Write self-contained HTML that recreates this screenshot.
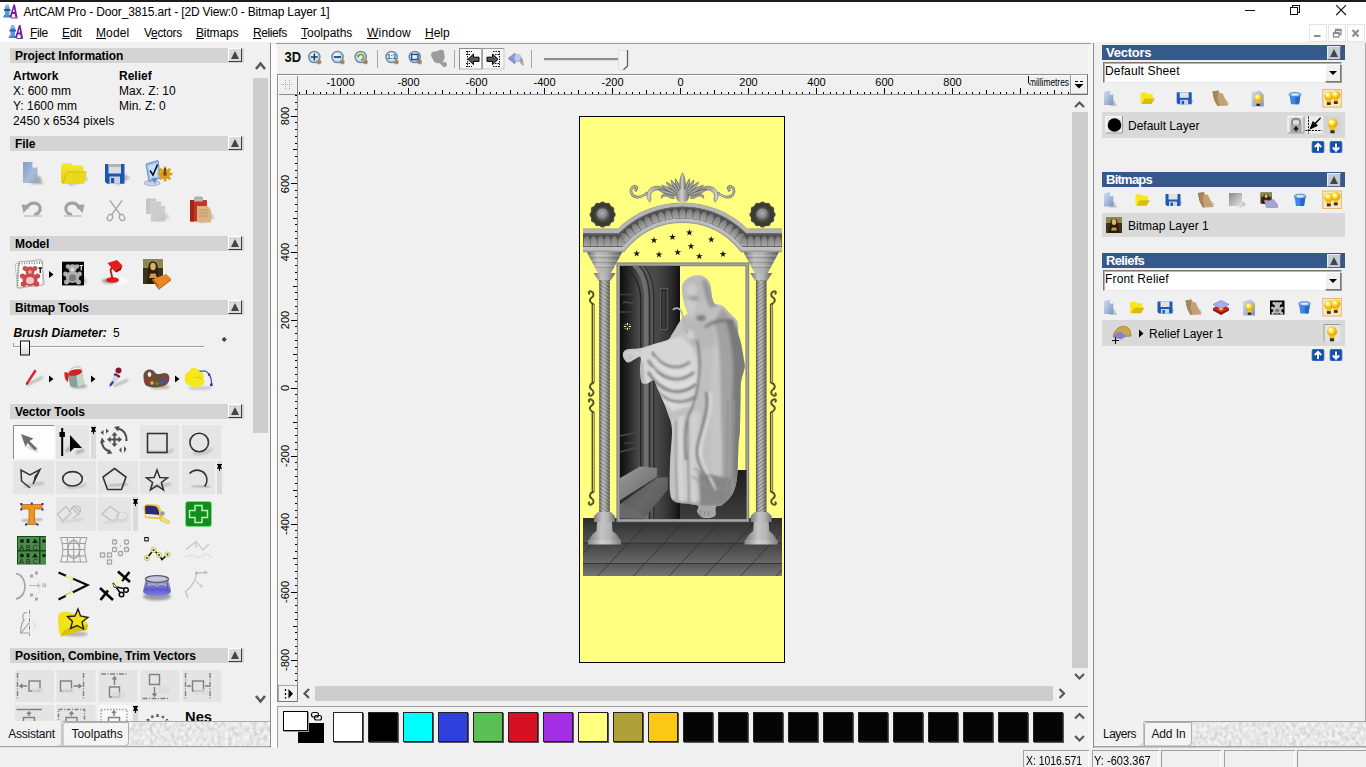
<!DOCTYPE html>
<html>
<head>
<meta charset="utf-8">
<title>ArtCAM Pro - Door_3815.art</title>
<style>
html,body{margin:0;padding:0;}
body{width:1366px;height:767px;overflow:hidden;background:#f0f0f0;font-family:"Liberation Sans",sans-serif;font-size:12px;color:#000;position:relative;}
.a{position:absolute;}
.t{position:absolute;white-space:pre;line-height:14px;height:14px;}
.b{font-weight:bold;}
/* title + menu */
#topline{left:0;top:0;width:1366px;height:2px;background:#1c1c1c;}
#titlebar{left:0;top:2px;width:1366px;height:40px;background:#fff;}
/* left panel section headers */
.hdr{position:absolute;left:10px;width:234px;height:15px;background:#d4d4d4;}
.hdr .t{left:5px;top:1px;font-weight:bold;letter-spacing:-0.1px;}
.cbtn{position:absolute;width:13.5px;height:14px;box-sizing:border-box;border:1px solid;border-color:#fff #3c3c3c #3c3c3c #fff;background:#dadada;}
.cbtn:after{content:"";position:absolute;left:1.5px;top:2px;border:4.3px solid transparent;border-top-width:0;border-bottom:8px solid #454545;}
.hdr .cbtn{left:218px;top:0px;}
/* right panel headers */
.bh{position:absolute;left:1102px;width:243px;height:15px;background:#36598c;}
.bh .t{left:4px;top:0px;font-weight:bold;color:#fff;font-size:13px;line-height:15px;height:15px;letter-spacing:-0.25px;}
.bh .cbtn{left:225px;top:1px;background:#c3cbd6;border-color:#e8ecf2 #5a6a80 #5a6a80 #e8ecf2;}
.dd{position:absolute;left:1103px;width:239px;height:21px;box-sizing:border-box;background:#fff;border:1px solid;border-color:#7a7a7a #e6e6e6 #e6e6e6 #7a7a7a;box-shadow:inset 1px 1px 0 #b4b4b4;}
.dd .t{left:1px;top:1px;letter-spacing:0.15px;}
.dd .ar{position:absolute;right:0px;top:1px;width:16px;height:18px;box-sizing:border-box;background:#f0f0f0;border:1px solid;border-color:#fff #7a7a7a #7a7a7a #fff;box-shadow:1px 1px 0 #9a9a9a;}
.dd .ar:after{content:"";position:absolute;left:3px;top:6px;border:4px solid transparent;border-bottom-width:0;border-top:4px solid #000;}
.lrow{position:absolute;left:1102px;width:243px;background:#d9d9d9;}
.sw{position:absolute;top:712px;width:30px;height:30px;box-sizing:border-box;border:1px solid #222;box-shadow:1px 1px 0 #555;}
.ud{position:absolute;width:12px;height:12px;background:#1b4fa8;border-radius:2px;}
</style>
</head>
<body>
<div class="a" id="titlebar"></div>
<div class="a" id="topline"></div>

<!-- TITLE -->
<div class="t" style="left:23.5px;top:4.5px;letter-spacing:-0.15px;">ArtCAM Pro - Door_3815.art - [2D View:0 - Bitmap Layer 1]</div>

<!-- MENU -->
<div id="menu">
<div class="t" style="left:30px;top:26px;letter-spacing:-0.4px"><u>F</u>ile</div>
<div class="t" style="left:62px;top:26px;letter-spacing:-0.3px"><u>E</u>dit</div>
<div class="t" style="left:96px;top:26px;letter-spacing:0.1px"><u>M</u>odel</div>
<div class="t" style="left:144px;top:26px;letter-spacing:-0.3px">V<u>e</u>ctors</div>
<div class="t" style="left:196px;top:26px;letter-spacing:-0.15px"><u>B</u>itmaps</div>
<div class="t" style="left:253px;top:26px;letter-spacing:-0.4px"><u>R</u>eliefs</div>
<div class="t" style="left:301px;top:26px;"><u>T</u>oolpaths</div>
<div class="t" style="left:367px;top:26px;letter-spacing:0.2px"><u>W</u>indow</div>
<div class="t" style="left:425px;top:26px;"><u>H</u>elp</div>
</div>

<!-- LEFT PANEL -->
<div id="left">
<div class="hdr" style="top:48px"><div class="t">Project Information</div><div class="cbtn"></div></div>
<div class="t b" style="left:13px;top:69px">Artwork</div>
<div class="t b" style="left:119px;top:69px">Relief</div>
<div class="t" style="left:13px;top:84px">X: 600 mm</div>
<div class="t" style="left:119px;top:84px">Max. Z: 10</div>
<div class="t" style="left:13px;top:99px">Y: 1600 mm</div>
<div class="t" style="left:119px;top:99px">Min. Z: 0</div>
<div class="t" style="left:13px;top:114px;letter-spacing:0.07px">2450 x 6534 pixels</div>
<div class="hdr" style="top:136px"><div class="t">File</div><div class="cbtn"></div></div>
<svg class="a" style="left:0;top:0" width="271" height="748" viewBox="0 0 271 748">
<defs>
<filter id="lb1" x="-40%" y="-40%" width="180%" height="180%"><feGaussianBlur stdDeviation="1.1"/></filter>
<filter id="lb2" x="-30%" y="-30%" width="160%" height="160%"><feGaussianBlur stdDeviation="1.2"/></filter>
<linearGradient id="gdoc" x1="0" y1="0" x2="1" y2="1"><stop offset="0" stop-color="#7f9ccb"/><stop offset="0.6" stop-color="#a9bcd8"/><stop offset="1" stop-color="#8fa3c4"/></linearGradient>
<linearGradient id="gfold" x1="0" y1="0" x2="0" y2="1"><stop offset="0" stop-color="#f6ea2a"/><stop offset="1" stop-color="#e2cc14"/></linearGradient>
<linearGradient id="gbowl" x1="0" y1="0" x2="0" y2="1"><stop offset="0" stop-color="#b8b8f0"/><stop offset="0.6" stop-color="#5a5ad0"/><stop offset="1" stop-color="#8a8ae0"/></linearGradient>
<linearGradient id="gthumb" x1="0" y1="0" x2="0" y2="1"><stop offset="0" stop-color="#fff"/><stop offset="1" stop-color="#d8d8d8"/></linearGradient>
</defs>

<!-- ===== FILE ROW 1 ===== -->
<!-- new doc -->
<path d="M30,184 L43,184 L40,176 L36,176 Z" fill="#9a9a9a" filter="url(#lb1)" opacity="0.8"/>
<path d="M23,162 H32.500 L37.500,167.500 V183 H23 Z" fill="url(#gdoc)"/>
<path d="M32.500,162 L37.500,167.500 H32.500 Z" fill="#f4f8ff"/>
<!-- folder -->
<path d="M70,186 L88,180 L84,174 L66,180 Z" fill="#9a9a9a" filter="url(#lb1)" opacity="0.6"/>
<path d="M61,166 C61,164 62,163 64,163 L71,163 L73,165.500 L81,165.500 C83,165.500 83.500,166.500 83.500,168 V172 L86.500,172 L84,183.500 H63 C61.500,183.500 61,182.500 61,181 Z" fill="url(#gfold)"/>
<path d="M63,183.500 L66.500,173.500 C67,172.300 67.500,172 69,172 H86.500 L84,183.500 Z" fill="#ecd81a"/>
<path d="M63,183.500 L66.500,173.500 C67,172.300 67.500,172 69,172 H86.500" fill="none" stroke="#c8b010" stroke-width="0.7"/>
<!-- floppy -->
<path d="M118,185 L130,178 L125,174 L114,182 Z" fill="#9a9a9a" filter="url(#lb1)" opacity="0.7"/>
<path d="M105,164 H124.500 V183.800 H107 L105,181.800 Z" fill="#1c54b4"/>
<rect x="108.500" y="164" width="12.500" height="9.500" fill="#dcdcdc"/><rect x="108.500" y="164" width="12.500" height="3" fill="#b4b4b4"/>
<rect x="109.500" y="176.500" width="10.500" height="7.300" fill="#c9d2e2"/><rect x="111" y="178" width="3.200" height="5" fill="#1c54b4"/>
<!-- options -->
<ellipse cx="152" cy="183" rx="8" ry="2.800" fill="#c8d2ec" stroke="#8894bc" stroke-width="0.6"/>
<path d="M146,164 L158,160.500 L160.500,178 L149,181.500 Z" fill="#9cc4f0" stroke="#5a78c0" stroke-width="0.8"/>
<path d="M148,166 L156.500,163.500 L158.500,176 L150.500,178.500 Z" fill="#c6e0fa"/>
<path d="M150,170.500 L153,175 L157.500,164.500" fill="none" stroke="#101018" stroke-width="1.600"/>
<path d="M151,178 L155,184 L157,178" fill="#7a86c0"/>
<g fill="#d8a020"><circle cx="165" cy="174" r="5.200"/><rect x="163.700" y="166.500" width="2.600" height="15" /><rect x="157.500" y="172.700" width="15" height="2.600"/><rect x="163.700" y="166.500" width="2.600" height="15" transform="rotate(45 165 174)"/><rect x="163.700" y="166.500" width="2.600" height="15" transform="rotate(-45 165 174)"/></g>
<circle cx="165" cy="174" r="2" fill="#7a5a10"/><rect x="164.300" y="168" width="1.400" height="5" fill="#3a2a08"/>

<!-- ===== FILE ROW 2 ===== -->
<g fill="none" stroke="#a2a2a2" stroke-width="3.200" stroke-linecap="butt">
<path d="M27,209 C27,202 38,201 40,207 C41,211 38,214 34,215"/>
<path d="M79,209 C79,202 68,201 66,207 C65,211 68,214 72,215"/>
</g>
<path d="M21.500,204.500 L31,205 L23.500,213 Z" fill="#a2a2a2"/><path d="M84.500,204.500 L75,205 L82.500,213 Z" fill="#a2a2a2"/>
<path d="M24,216 H42 M64,216 H82" stroke="#c4c4c4" stroke-width="1.500"/>
<!-- scissors -->
<g fill="none" stroke="#a8a8a8" stroke-width="1.300"><path d="M110,200.500 L120.500,215 M122,200.500 L111.500,215"/><ellipse cx="110" cy="217.500" rx="2.600" ry="3.200" transform="rotate(25 110 217.500)"/><ellipse cx="122" cy="217.500" rx="2.600" ry="3.200" transform="rotate(-25 122 217.500)"/></g>
<!-- copy -->
<path d="M146,198.500 H156 V214 H146 Z" fill="#c6c6c6"/><path d="M151,201.500 H161 L165,206 V221.500 H151 Z" fill="#cdcdcd" stroke="#dcdcdc" stroke-width="0.600"/><path d="M161,201.500 L165,206 H161 Z" fill="#eee"/>
<path d="M155,222.500 L170,218 L166,213" fill="#c0c0c0" filter="url(#lb1)" opacity="0.7"/>
<!-- paste -->
<path d="M200,224 L214,218 L210,212" fill="#9a9a9a" filter="url(#lb1)" opacity="0.7"/>
<rect x="190" y="200" width="17" height="21.500" rx="1" fill="#c83424"/><rect x="190" y="200" width="4" height="21.500" fill="#a82418"/>
<path d="M195,197 H202 L203,201.500 H194 Z" fill="#b8b8b8" stroke="#8a8a8a" stroke-width="0.600"/>
<path d="M197,206 H207.500 L211,209.500 V222.500 H197 Z" fill="#dcb484"/><path d="M199,210 H208 M199,213 H208 M199,216 H208" stroke="#b89060" stroke-width="0.800"/>

<!-- ===== MODEL ROW ===== -->
<path d="M15,264 L41,259 L44.500,284 L18,288.500 Z" fill="#fafafa" stroke="#b0b0b0" stroke-width="0.800"/>
<path d="M19,261.500 L42.500,261 L43,285 L17,287.500 Z" fill="#fff" stroke="#9c9c9c" stroke-width="0.800"/>
<path d="M19,263.500 L42.500,263 " stroke="#888" stroke-width="2" stroke-dasharray="1 1.500"/>
<path d="M18.500,265 L17.500,286" stroke="#888" stroke-width="2" stroke-dasharray="1 1.500"/>
<g fill="#cc4a4a"><circle cx="25" cy="268.500" r="2.400"/><circle cx="35" cy="268.500" r="2.400"/><circle cx="30" cy="271" r="4.600"/><ellipse cx="30" cy="279.500" rx="7.500" ry="6.500"/><circle cx="23.500" cy="284" r="2.800"/><circle cx="36.500" cy="284" r="2.800"/><circle cx="22.500" cy="276" r="2.600"/><circle cx="37.500" cy="276" r="2.600"/></g>
<ellipse cx="30" cy="280.500" rx="4" ry="3.600" fill="#f4c8c8"/><circle cx="30" cy="272" r="1.800" fill="#f0b0b0"/>
<path d="M38.500,268 H42 M40.250,268 V273" stroke="#111" stroke-width="1.300"/>
<path d="M49,271 L53.500,274.500 L49,278 Z" fill="#000"/>
<path d="M78,287 L87,282 L84,276" fill="#9a9a9a" filter="url(#lb1)" opacity="0.600"/>
<rect x="62" y="261.700" width="22" height="23.700" fill="#050505"/>
<g fill="#b0b0b0"><circle cx="68" cy="266.500" r="2.200"/><circle cx="77" cy="266.500" r="2.200"/><circle cx="72.500" cy="268.500" r="4.200"/><ellipse cx="72.500" cy="277" rx="6.800" ry="6"/><circle cx="66.500" cy="282" r="2.500"/><circle cx="78.500" cy="282" r="2.500"/><circle cx="65.500" cy="274" r="2.400"/><circle cx="79.500" cy="274" r="2.400"/></g>
<ellipse cx="72.500" cy="278" rx="3.600" ry="3.400" fill="#7c7c7c"/><circle cx="72.500" cy="269.500" r="1.700" fill="#e0e0e0"/>
<path d="M79.500,265.500 H83 M81.250,265.500 V270.500" stroke="#eee" stroke-width="1.200"/>
<!-- lamp -->
<ellipse cx="119" cy="281" rx="9" ry="3" fill="#fff" filter="url(#lb2)"/>
<ellipse cx="110" cy="281" rx="8" ry="2.600" fill="#777" filter="url(#lb2)" opacity="0.700"/>
<ellipse cx="112.500" cy="280" rx="6.500" ry="2.800" fill="#e21c1c"/>
<path d="M112.500,279 L110.500,270 L113,266" fill="none" stroke="#c01818" stroke-width="1.800"/>
<path d="M107.500,263 L117,260 L122.500,265.500 L114,271 Z" fill="#e61c1c"/><path d="M114,271 L122.500,265.500 L121,270 L116.500,272.500 Z" fill="#a81010"/>
<!-- mona -->
<rect x="143" y="259" width="20" height="25" fill="#3c3218"/><rect x="143" y="259" width="20" height="9" fill="#8a8a50"/>
<path d="M147,284 C147,276 149,272 153,272 C157,272 159.500,276 160,284 Z" fill="#2a200c"/>
<path d="M148.500,266 C148.500,260 157.500,260 157.500,266 L158.500,274 H147.500 Z" fill="#2c1e0c"/>
<ellipse cx="153" cy="266.500" rx="2.800" ry="3.800" fill="#d8b070"/><path d="M150.500,273.500 H155.500 L157,278 H149 Z" fill="#c89858"/>
<path d="M152,279.500 L166,274 L171,278.500 L158,288.500 Z" fill="#e88820"/><path d="M152,279.500 L158,288.500 L158,285 L153.500,279 Z" fill="#b45c10"/><path d="M158,288.500 L171,278.500 L171,280.500 L158.500,290 Z" fill="#c06a12"/>

<!-- ===== BITMAP TOOLS ===== -->
<rect x="13" y="346" width="191" height="1" fill="#a0a0a0"/><rect x="13" y="347" width="191" height="1" fill="#fff"/><rect x="13" y="343" width="1" height="4" fill="#a0a0a0"/>
<rect x="20.500" y="341" width="9" height="14" fill="url(#gthumb)" stroke="#111" stroke-width="1"/>
<path d="M224.200,336.800 L226.800,339.400 L224.200,342 L221.600,339.400 Z" fill="#3a4660"/>
<!-- pencil -->
<path d="M27,385 L43,377" stroke="#9a9a9a" stroke-width="2" filter="url(#lb1)" opacity="0.800"/>
<path d="M34.500,369.500 L36.800,371 L28,384 L26,385 L26.300,382.500 Z" fill="#dc2430"/><path d="M26,385 L26.300,382.500 L28,384 Z" fill="#502020"/>
<path d="M49,375.500 L53.500,379 L49,382.500 Z M91,375.500 L95.500,379 L91,382.500 Z M175,375.500 L179.500,379 L175,382.500 Z" fill="#000"/>
<!-- bucket -->
<ellipse cx="79" cy="386" rx="8" ry="2.500" fill="#8a8a8a" filter="url(#lb1)" opacity="0.700"/>
<path d="M68,374 L82,371 L84,384 C80,388 73,388 70,386 Z" fill="#8aa09c"/><path d="M76,373 L82,371 L84,384 C82,386 80,386.500 78,387 Z" fill="#c8d4d0"/>
<ellipse cx="75" cy="372.500" rx="7.200" ry="3" fill="#d42020" transform="rotate(-12 75 372.500)"/>
<path d="M64.500,372 C64,378 66,381 68,382 L69,373 Z" fill="#d42020"/>
<path d="M68,374 C70,366 82,364 82,371" fill="none" stroke="#aaa" stroke-width="0.800"/>
<!-- dropper -->
<path d="M114,386 L128,380" stroke="#9a9a9a" stroke-width="2.400" filter="url(#lb1)" opacity="0.800"/>
<circle cx="118.500" cy="370.500" r="3" fill="#8a1830"/><path d="M115,373 L120.500,376 L119,378 L113.500,375 Z" fill="#701428"/>
<path d="M115.500,375.500 L118.500,377.500 L112,385 L109.500,386.500 L110,384 Z" fill="#d4dcf4" stroke="#8890c0" stroke-width="0.500"/><path d="M112.500,381 L114,382.300 L111.500,385.500 L109.500,386.500 L110,384 Z" fill="#2838b0"/>
<!-- palette -->
<ellipse cx="160" cy="387" rx="10" ry="2" fill="#8a8a8a" filter="url(#lb1)" opacity="0.600"/>
<path d="M143.500,377 C143,371 148,368.500 152,370 C155,371 155,374 158,374 C162,374 164,372 167,373.500 C171,375.500 170,384 164,386 C158,388 148,388 145.500,385 C144,383 143.700,380 143.500,377 Z" fill="#6e4c3c"/>
<ellipse cx="149.500" cy="374.500" rx="1.800" ry="2.400" fill="#f0f0f0"/>
<circle cx="147.500" cy="381" r="1.700" fill="#d02020"/><circle cx="152" cy="383" r="1.700" fill="#e8c020"/><circle cx="157" cy="383.500" r="1.700" fill="#28a030"/><circle cx="162" cy="382.500" r="1.700" fill="#2060d0"/><circle cx="166" cy="380" r="1.700" fill="#8030c0"/>
<!-- yellow shape -->
<ellipse cx="200" cy="388" rx="12" ry="1.800" fill="#9a9ac0" filter="url(#lb1)" opacity="0.500"/>
<path d="M200,372 C207,368 212,376 211.500,385" fill="none" stroke="#3848a8" stroke-width="1.200"/>
<g fill="#303890"><rect x="198.500" y="370.500" width="2.600" height="2.600"/><rect x="210" y="383.500" width="2.600" height="2.600"/><rect x="208" y="373.500" width="2.200" height="2.200"/></g>
<path d="M185,377 C185,372 189,372 190,370 C192,367 198,367.500 199,371 C203,372 205,375 203,378.500 C206,381 204,386 200,386 C197,388.500 192,388 190.500,385.500 C186,385.500 184,381 185,377 Z" fill="#f4e81c"/>
<path d="M194,377 L203,378.500" stroke="#d8c810" stroke-width="0.800"/>

<!-- ===== VECTOR TOOLS ===== -->
<!-- button backgrounds -->
<g fill="#e5e5e5">
<rect x="56" y="425" width="33" height="34"/><rect x="140" y="425" width="39" height="34"/><rect x="182" y="425" width="39" height="34"/>
<rect x="13" y="461" width="41" height="33"/><rect x="56" y="461" width="40" height="33"/><rect x="98" y="461" width="40" height="33"/><rect x="140" y="461" width="39" height="33"/><rect x="182" y="461" width="33" height="33"/>
<rect x="56" y="497" width="40" height="34"/><rect x="98" y="497" width="33" height="34"/>
</g>
<g fill="#dadada"><rect x="91" y="425" width="5" height="34"/><rect x="217" y="461" width="5" height="33"/><rect x="133" y="497" width="5" height="34"/></g>
<g fill="#000"><path d="M91,427 H96 V428.200 H91 Z M92,428 H95 V430.500 H92 Z M91,430.500 H96 V431.700 H91 Z M93,431.500 H94 V434 H93 Z"/><path d="M217,464 H222 V465.200 H217 Z M218,465 H221 V467.500 H218 Z M217,467.500 H222 V468.700 H217 Z M219,468.500 H220 V471 H219 Z"/><path d="M133,499 H138 V500.200 H133 Z M134,500 H137 V502.500 H134 Z M133,502.500 H138 V503.700 H133 Z M135,503.500 H136 V506 H135 Z"/></g>
<!-- selected button -->
<rect x="13.500" y="425.500" width="41" height="33.500" fill="#fdfdfd"/><path d="M13.500,459 V425.500 H54.500" fill="none" stroke="#8a8a8a"/>
<path d="M25,446 L38,452 L36,447" fill="#b0b0b0" filter="url(#lb1)"/>
<path d="M21,434 L33.500,438.500 L29.500,441 L37,448.500 L35,450.500 L27.500,443 L25.500,447 Z" fill="#6e6e6e"/>
<!-- node edit -->
<path d="M66,452 L70,447 M76,453 L84,450" stroke="#aaa" stroke-width="3" filter="url(#lb1)"/>
<rect x="61.200" y="428" width="2" height="28" fill="#000"/><rect x="59.500" y="432" width="5.400" height="5" fill="#000"/>
<path d="M70,435 V452 L74,448 L82,448 Z" fill="#000"/>
<!-- transform -->
<g fill="#4e4e4e"><path d="M114.500,432 L117.500,435.500 H115.500 V438.500 H118.500 V436.500 L122,439.500 L118.500,442.500 V440.500 H115.500 V443.500 H117.500 L114.500,447 L111.500,443.500 H113.500 V440.500 H110.500 V442.500 L107,439.500 L110.500,436.500 V438.500 H113.500 V435.500 H111.500 Z"/>
<path d="M101.500,431 H106.500 L104,428 Z M103,433.500 H108 L105.500,436.500 Z" transform="rotate(90 105 432)"/>
<path d="M121.500,447 V453 L119,450 Z M124,446 V453 L126.500,449 Z"/></g>
<g fill="none" stroke="#4e4e4e" stroke-width="2.200"><path d="M118,428.500 C124,430 127,435 126.500,441"/><path d="M110,451.500 C104,450 101.500,445 102,440"/></g>
<path d="M114,427 L119.500,426 L118,431.500 Z M112.500,453.500 L107,454 L109,449 Z M100,443 L102,437.500 L105,442 Z" fill="#4e4e4e"/>
<!-- rect -->
<path d="M148,452 H170 L173,449" stroke="#b8b8b8" stroke-width="2" fill="none" filter="url(#lb1)"/>
<rect x="147.500" y="433.500" width="19.500" height="19" fill="none" stroke="#333" stroke-width="1.600"/>
<!-- circle -->
<path d="M193,453 C200,455 208,453 212,449" stroke="#b8b8b8" stroke-width="2" fill="none" filter="url(#lb1)"/>
<circle cx="199.200" cy="442.500" r="9.300" fill="none" stroke="#333" stroke-width="1.600"/>
<!-- polyline -->
<path d="M24,486 L44,483" stroke="#b8b8b8" stroke-width="2.500" filter="url(#lb1)"/>
<path d="M30,488 L21.500,481 L21,470 L30,475 L40,469.500 L33,484" fill="none" stroke="#333" stroke-width="1.500"/><path d="M40,469.500 L33,484 L34.500,476 Z" fill="#333"/>
<!-- ellipse -->
<path d="M66,487 C73,489 82,487 86,484" stroke="#b8b8b8" stroke-width="2" fill="none" filter="url(#lb1)"/>
<ellipse cx="72.500" cy="478.800" rx="9.800" ry="7.200" fill="none" stroke="#333" stroke-width="1.600"/>
<!-- pentagon -->
<path d="M108,486 L128,484" stroke="#b8b8b8" stroke-width="2.500" filter="url(#lb1)"/>
<path d="M114.500,468.500 L126,477 L121.500,489.500 H107.500 L103,477 Z" fill="none" stroke="#333" stroke-width="1.600"/>
<!-- star -->
<path d="M150,487 L171,484" stroke="#b8b8b8" stroke-width="2.500" filter="url(#lb1)"/>
<path d="M157,470 L159.800,477.500 L167.500,477.800 L161.400,482.500 L163.600,490 L157,485.700 L150.400,490 L152.600,482.500 L146.500,477.800 L154.200,477.500 Z" fill="none" stroke="#333" stroke-width="1.500"/>
<!-- arc -->
<path d="M192,486 L210,487" stroke="#b8b8b8" stroke-width="2.500" filter="url(#lb1)"/>
<path d="M189.500,473.500 C195,468 204,469.500 206.500,477 C207.500,480.500 206.500,484 204.500,486.500" fill="none" stroke="#333" stroke-width="1.600"/>
<!-- T text -->
<path d="M22,521 L42,519" stroke="#b4b4b4" stroke-width="3" filter="url(#lb1)"/>
<path d="M21.500,504.500 H42 V509 H34.500 V521 L37,524.500 H26.500 L29,521 V509 H21.500 Z" fill="#ee9422" stroke="#b86810" stroke-width="0.800"/>
<g fill="#2a2aa0"><rect x="20.300" y="503" width="2" height="2"/><rect x="41.500" y="503" width="2" height="2"/><rect x="20.300" y="508.500" width="2" height="2"/><rect x="41.500" y="508.500" width="2" height="2"/><rect x="25" y="523.500" width="2" height="2"/><rect x="36.500" y="523.500" width="2" height="2"/><rect x="30.800" y="502.500" width="2" height="2"/></g>
<!-- disabled icons row3 -->
<g fill="none" stroke="#bdbdbd" stroke-width="1.200"><path d="M57.500,514 L66,506.500 L71,513 L63,521 Z"/><path d="M70,511 C72,505 78,505 80,508 C82,512 78,516 73,518"/><path d="M72,508 L78,514 M74,506.500 L80,512"/>
<path d="M102,514 L110,506.500 L119,513 L117,518.500 C115,521 111,521 109,519 Z"/><ellipse cx="122" cy="516" rx="6" ry="4" stroke="#d4d4d4"/></g>
<path d="M60,522 L84,519 M104,523 L128,520" stroke="#cfcfcf" stroke-width="2" filter="url(#lb1)"/>
<!-- tape measure -->
<path d="M150,524 L171,524" stroke="#b0b0b0" stroke-width="3" filter="url(#lb1)"/>
<path d="M143.500,508 C143.500,505 145.500,504 148,504 L156,504.500 C159,505 161,508 161.500,512 L162,519.500 L145,518 Z" fill="#f0c828"/>
<path d="M145,507.500 C145,506 146,505.500 148,505.500 L154,506 C157,506.500 158.500,509 159,512.500 L159,515 L145.500,514 Z" fill="#2a2a78"/>
<path d="M145.500,514 L159,515 L159,517.500 L145.500,516.500 Z" fill="#e8e8f4"/>
<path d="M161.500,516 L170,521.500 L169,524 L160,520.500 Z" fill="#f0e070" stroke="#c8b040" stroke-width="0.500"/><circle cx="162.500" cy="513.500" r="2.200" fill="#9a9a9a"/>
<!-- green plus -->
<rect x="185.500" y="501.500" width="26" height="25" rx="2.500" fill="#0f8f1a" stroke="#7fd888" stroke-width="1"/>
<path d="M195,505.500 H202 V510.500 H207.500 V517.500 H202 V522.500 H195 V517.500 H189.500 V510.500 H195 Z" fill="none" stroke="#b8f0b8" stroke-width="1.500"/>

<!-- ===== ROW 4 ===== -->
<rect x="17" y="536" width="29" height="28.500" fill="#154a17"/>
<g fill="#8fd08f"><rect x="18" y="537" width="21" height="13" opacity="0.480"/><rect x="18" y="551.500" width="21" height="13" opacity="0.480"/><rect x="40.500" y="537" width="5.500" height="13" opacity="0.480"/><rect x="40.500" y="551.500" width="5.500" height="13" opacity="0.480"/></g>
<g fill="#0a2a0a"><circle cx="22" cy="541" r="2"/><rect x="26.500" y="539" width="3" height="4"/><path d="M32,543 L35,538.500 L38,543 Z"/><circle cx="22" cy="555.500" r="2"/><rect x="26.500" y="553.500" width="3" height="4"/><path d="M32,557.500 L35,553 L38,557.500 Z"/><circle cx="44" cy="541" r="1.800"/><circle cx="44" cy="555.500" r="1.800"/></g>
<text x="19" y="550" font-family="Liberation Sans" font-size="7.500" fill="#0c300c" textLength="19">ABC</text><text x="19" y="564.300" font-family="Liberation Sans" font-size="7.500" fill="#0c300c" textLength="19">ABC</text>
<!-- grid warp -->
<g fill="none" stroke="#9c9c9c" stroke-width="1"><path d="M60.500,537.500 H87 C84,545 84,554 87,562 H60.500 C63.500,554 63.500,545 60.500,537.500 Z"/><path d="M62,543.500 H85.500 M62.500,549.500 H85 M62,556 H85.500 M67,537.500 C68.500,545 68.500,554 67,562 M73.700,537.500 V562 M80.500,537.500 C79,545 79,554 80.500,562"/><ellipse cx="73.700" cy="549.500" rx="6" ry="9" stroke-width="1.600" stroke="#a8a8a8"/></g>
<!-- small squares -->
<g fill="none" stroke="#a4a4a4" stroke-width="1.300"><rect x="100.500" y="553" width="4" height="4"/><rect x="107.500" y="553" width="4" height="4"/><rect x="107.500" y="560" width="4" height="4"/><rect x="112.500" y="540" width="4" height="4" rx="1"/><rect x="124.500" y="540" width="4" height="4" rx="1"/><rect x="112.500" y="547.500" width="4" height="4" rx="1"/><rect x="124.500" y="547.500" width="4" height="4" rx="1"/><rect x="118.500" y="551.500" width="4" height="4" rx="1"/></g><circle cx="120.500" cy="546" r="0.800" fill="#a4a4a4"/>
<!-- nodes -->
<rect x="144.800" y="537.500" width="3.400" height="3.400" fill="#fff" stroke="#000" stroke-width="1"/>
<path d="M147,558 L153.500,550 L159,555 L162,559.500 L167.500,554.500" fill="none" stroke="#111" stroke-width="1.600"/>
<g fill="#f4f4a8" stroke="#b8b860" stroke-width="0.800"><circle cx="147" cy="558" r="2.600"/><circle cx="153.500" cy="550" r="2.600"/><circle cx="159" cy="555" r="2.600"/><circle cx="167.500" cy="554.500" r="2.600"/></g>
<g fill="#222"><circle cx="147" cy="558" r="0.900"/><circle cx="153.500" cy="550" r="0.900"/><circle cx="159" cy="555" r="0.900"/><circle cx="167.500" cy="554.500" r="0.900"/></g>
<!-- light gray zigzag -->
<g fill="none" stroke="#c4c4c4" stroke-width="1.100"><path d="M186,549.500 L196,541.500 L203,550 L209,544"/><path d="M186,557 C192,551 198,562 204,555 C207,552 210,556 212,558" stroke="#dadada" stroke-dasharray="1.500 1.200" stroke-width="2"/><path d="M196,543 V548"/></g>

<!-- ===== ROW 5 ===== -->
<g fill="none" stroke="#a6a6a6" stroke-width="1.700"><path d="M16,573.500 C27,575 29,596 16,599"/></g>
<g fill="#a6a6a6"><rect x="30" y="574.500" width="3" height="3"/><rect x="35" y="571.500" width="3" height="3"/><rect x="30" y="593.500" width="3" height="3"/><rect x="35" y="597.500" width="3" height="3"/></g>
<path d="M29,585.500 H40 M37,583.500 L40,585.500 L37,587.500" fill="none" stroke="#b4b4b4" stroke-width="1"/><rect x="43" y="584" width="2.600" height="2.600" fill="none" stroke="#b0b0b0"/>
<path d="M34,577 C42,579 42,593 34,596" fill="none" stroke="#d8d8d8" stroke-width="1" stroke-dasharray="2 1.500"/>
<!-- black V -->
<path d="M58.500,572.500 L87.500,585 L58.500,599.500" fill="none" stroke="#0a0a0a" stroke-width="2.200"/>
<path d="M66,575.500 L73,579 M66,596.500 L73,592.500" stroke="#f4f4a0" stroke-width="3"/>
<path d="M69,577.500 C72,582 72,589 69,594.500" fill="none" stroke="#e8e890" stroke-width="1" stroke-dasharray="1.500 1"/>
<!-- X scissors -->
<g stroke="#050505" stroke-width="2.600" fill="none"><path d="M118,571.500 L130,582 M129.500,572 L122,581"/><path d="M100,588 L113,600 M108,590.500 L100.500,600"/></g>
<path d="M110,589 L122,578" stroke="#f4f4b0" stroke-width="2.500"/>
<g fill="none" stroke="#050505" stroke-width="1.500"><circle cx="121.500" cy="594.500" r="2.300"/><circle cx="126" cy="590" r="2.300"/><path d="M120,592.500 L113,583 M124,588.500 L113.500,586.500"/></g>
<path d="M113,583 L118,588 L113.500,586.500 Z" fill="#fff" stroke="#333" stroke-width="0.600"/>
<!-- blue bowl -->
<ellipse cx="157" cy="596.500" rx="14" ry="4" fill="#8a8a8a" filter="url(#lb1)" opacity="0.800"/>
<path d="M145.500,579 L143,592 C147,598 167,598 171,592 L168.500,579 Z" fill="url(#gbowl)"/>
<ellipse cx="157" cy="579" rx="11.500" ry="3.400" fill="#c4c8dc" stroke="#5a5a68" stroke-width="1.200"/>
<path d="M145.500,587 C150,583 154,583.500 157,586 C160,583.500 164,583 168.500,587" fill="none" stroke="#c8c890" stroke-width="1"/>
<path d="M147,581 L146,591 M167,581 L168,591" stroke="#5c6078" stroke-width="1"/>
<!-- light gray arcs -->
<g fill="none" stroke="#c2c2c2" stroke-width="1.300"><path d="M196.500,573 C196,582 190,588 185.500,592 L188,598"/><path d="M196.500,573 L207,572.500 M204.500,571 L207,572.500 L204.500,574"/><path d="M196,581 L202,587 M199.500,586.500 L202,587 L201.500,584.500" stroke="#d0d0d0"/></g><circle cx="196.500" cy="573" r="1.400" fill="#b4b4b4"/>

<!-- ===== ROW 6 ===== -->
<g fill="none" stroke="#9e9e9e" stroke-width="1.100"><path d="M27,612.500 C22,612.500 22,618 24,620 C21,623 21,627 20.500,633 H29.500"/><path d="M21,633 L29,623"/></g>
<path d="M29.500,610 V636" stroke="#8a8a8a" stroke-width="1" stroke-dasharray="4 1.500 1 1.500"/>
<path d="M33,622 C36,623 36,628 33,629" fill="none" stroke="#d4d4d4" stroke-width="1"/>
<!-- yellow star folder -->
<ellipse cx="76" cy="634" rx="12" ry="2.500" fill="#9a9a9a" filter="url(#lb1)" opacity="0.700"/>
<path d="M58,617 C58,613 62,611 68,612 L80,615 L88,624 L87,629 L61,636.500 C58.500,632 58,625 58,617 Z" fill="#f2e21a"/>
<path d="M61,636.500 C62,631 66,628 72,627 L88,624.500 L87,630 C80,631 70,634 61,636.500 Z" fill="#d8c410"/>
<path d="M78,609 L80.500,616 L88,617.500 L82,622 L83.500,629 L77,625.500 L70.500,628.500 L72.500,621.500 L67.500,616.500 L75,616 Z" fill="#f2e21a" stroke="#222" stroke-width="1.400"/>

<!-- ===== POSITION ROW ===== -->
<g fill="#e4e4e4"><rect x="15" y="670" width="39" height="32"/><rect x="56.500" y="670" width="39" height="32"/><rect x="98.500" y="670" width="39" height="32"/><rect x="140.500" y="670" width="39" height="32"/><rect x="182.500" y="670" width="39" height="32"/>
<rect x="15" y="705" width="39" height="17"/><rect x="56.500" y="705" width="39" height="17"/></g>
<rect x="98.500" y="705" width="33" height="17" fill="#f8f8f8"/><rect x="133" y="705" width="5" height="17" fill="#dadada"/>
<path d="M133,706 H138 V707.200 H133 Z M134,707 H137 V709.500 H134 Z M133,709.500 H138 V710.700 H133 Z M135,710.500 H136 V713 H135 Z" fill="#000"/>
<g fill="none" stroke="#808080" stroke-width="1.450">
<path d="M17.500,673 V699" stroke-dasharray="5 1.500 1 1.500"/><rect x="29" y="681" width="11" height="10"/><path d="M20,686 H27 M22.500,684 L20,686 L22.500,688"/>
<path d="M83.500,673 V699" stroke-dasharray="5 1.500 1 1.500"/><rect x="60.500" y="681" width="11" height="10"/><path d="M73.500,686 H81 M78.500,684 L81,686 L78.500,688"/>
<path d="M101,674 H127" stroke-dasharray="5 1.500 1 1.500"/><rect x="109.500" y="687" width="10" height="10"/><path d="M114.500,677 V685 M112.500,679.500 L114.500,677 L116.500,679.500"/>
<path d="M142.500,698.500 H168" stroke-dasharray="5 1.500 1 1.500"/><rect x="149.500" y="674.500" width="10" height="10"/><path d="M154.500,687 V696 M152.500,693.500 L154.500,696 L156.500,693.500"/>
<path d="M185.500,673 V699 M210,673 V699" stroke-dasharray="5 1.500 1 1.500"/><rect x="192.500" y="681" width="11" height="10"/><path d="M187,686 H191 M205,686 H209"/>
<path d="M16.500,709.500 H42" /><path d="M29,712 V716 M27,714 L29,712 L31,714"/><rect x="23.500" y="717.500" width="11" height="6"/>
<rect x="58.500" y="709.500" width="26" height="14" stroke-dasharray="4 1.500 1 1.500"/><path d="M71.500,712 V716 M69.500,714 L71.500,712 L73.500,714"/><rect x="66" y="717.500" width="11" height="6"/>
<rect x="101" y="709.500" width="26" height="14" stroke-dasharray="1.500 1.500" stroke="#a0a0a0"/><path d="M114,711 V716 M112,713 L114,711 L116,713"/><rect x="108.500" y="717.500" width="11" height="6"/>
</g>
<g fill="#dcdcdc" opacity="0.700"><rect x="32" y="688" width="12" height="6"/><rect x="62" y="688" width="12" height="6"/><rect x="112" y="692" width="14" height="7"/><rect x="158" y="686" width="12" height="7"/><rect x="194" y="689" width="14" height="6"/></g>
<!-- text on arc + Nes -->
<g font-family="Liberation Sans" font-size="5" font-weight="bold" fill="#111"><text transform="translate(148,722) rotate(-50)">a</text><text transform="translate(151.500,718.500) rotate(-25)">a</text><text transform="translate(156,717) rotate(0)">a</text><text transform="translate(161,717.500) rotate(25)">ᴀ</text><text transform="translate(165,720) rotate(55)">c</text></g>
<text x="185" y="721.500" font-family="Liberation Sans" font-weight="bold" font-size="14" textLength="27" lengthAdjust="spacingAndGlyphs" fill="#050505">Nes</text>
<text x="185" y="731" font-family="Liberation Sans" font-weight="bold" font-size="14" textLength="27" lengthAdjust="spacingAndGlyphs" fill="#050505">Nes</text>
</svg>
<div class="t" style="left:13.5px;top:326px;font-weight:bold;font-style:italic;">Brush Diameter:</div>
<div class="t" style="left:113px;top:326px;">5</div>

<div class="hdr" style="top:236px"><div class="t">Model</div><div class="cbtn"></div></div>
<div class="hdr" style="top:300px"><div class="t">Bitmap Tools</div><div class="cbtn"></div></div>
<div class="hdr" style="top:404px"><div class="t">Vector Tools</div><div class="cbtn"></div></div>
<div class="hdr" style="top:648px"><div class="t">Position, Combine, Trim Vectors</div><div class="cbtn"></div></div>
</div>

<!-- CENTER -->
<div id="center">
<!-- splitter + frame lines -->
<div class="a" style="left:271px;top:44px;width:6px;height:704px;background:#fbfbfb"></div>
<div class="a" style="left:270px;top:43px;width:1px;height:705px;background:#8c8c8c"></div>
<div class="a" style="left:1365px;top:43px;width:1px;height:705px;background:#a6a6a6"></div>
<div class="a" style="left:276px;top:43px;width:815px;height:1px;background:#a0a0a0"></div>
<div class="a" style="left:277px;top:44px;width:814px;height:30px;background:#f0f0f0"></div>
<div class="a" style="left:1088px;top:44px;width:5px;height:704px;background:#f6f6f6"></div>
<div class="a" style="left:1093px;top:43px;width:1px;height:705px;background:#8e8e8e"></div>
<!-- ruler frame -->
<div class="a" style="left:277px;top:74px;width:811px;height:611px;background:#f0f0f0"></div>
<div class="a" style="left:277px;top:74px;width:811px;height:1px;background:#8c8c8c"></div>
<div class="a" style="left:277px;top:74px;width:1px;height:628px;background:#8c8c8c"></div>
<div class="a" style="left:278px;top:94px;width:793px;height:1px;background:#8c8c8c"></div>
<div class="a" style="left:297px;top:75px;width:1px;height:610px;background:#8c8c8c"></div>
<div class="a" style="left:278px;top:75px;width:792px;height:1px;background:#fff"></div>
<div class="a" style="left:278px;top:75px;width:1px;height:609px;background:#fff"></div>
<!-- canvas -->
<div class="a" style="left:298px;top:95px;width:774px;height:590px;background:#f0f0f0"></div>
<!-- v scrollbar -->
<div class="a" style="left:1072px;top:95px;width:16px;height:590px;background:#f0f0f0"></div>
<div class="a" style="left:1072px;top:112px;width:16px;height:556px;background:#cdcdcd"></div>
<!-- h scrollbar -->
<div class="a" style="left:298px;top:685px;width:790px;height:17px;background:#f0f0f0"></div>
<div class="a" style="left:315px;top:686px;width:738px;height:15px;background:#cdcdcd"></div>
<!-- palette panel -->
<div class="a" style="left:277px;top:706px;width:811px;height:1px;background:#a0a0a0"></div>
<div class="a" style="left:277px;top:706px;width:1px;height:42px;background:#a0a0a0"></div>
<div class="a" style="left:278px;top:707px;width:810px;height:41px;background:#f1f1f1"></div>
<div class="a" style="left:298px;top:723px;width:26px;height:20px;background:#000"></div>
<div class="a" style="left:283px;top:711px;width:25px;height:20px;background:#fff;box-sizing:border-box;border:1px solid #000;box-shadow:1px 1px 0 #999"></div>
<div class="sw" style="left:333px;background:#ffffff"></div><div class="sw" style="left:368px;background:#000000"></div><div class="sw" style="left:403px;background:#00ffff"></div><div class="sw" style="left:438px;background:#3040dc"></div><div class="sw" style="left:473px;background:#5cbf55"></div><div class="sw" style="left:508px;background:#d81024"></div><div class="sw" style="left:543px;background:#a22ee6"></div><div class="sw" style="left:578px;background:#ffff80"></div><div class="sw" style="left:613px;background:#b0a03a"></div><div class="sw" style="left:648px;background:#fcc818"></div><div class="sw" style="left:683px;background:#050505"></div><div class="sw" style="left:718px;background:#050505"></div><div class="sw" style="left:753px;background:#050505"></div><div class="sw" style="left:788px;background:#050505"></div><div class="sw" style="left:823px;background:#050505"></div><div class="sw" style="left:858px;background:#050505"></div><div class="sw" style="left:893px;background:#050505"></div><div class="sw" style="left:928px;background:#050505"></div><div class="sw" style="left:963px;background:#050505"></div><div class="sw" style="left:998px;background:#050505"></div><div class="sw" style="left:1033px;background:#050505"></div>
<svg class="a" style="left:0;top:0" width="1366" height="767" viewBox="0 0 1366 767">
<g fill="#000" shape-rendering="crispEdges"><rect x="299" y="92" width="1" height="2"/><rect x="306" y="90" width="1" height="4"/><rect x="313" y="92" width="1" height="2"/><rect x="320" y="92" width="1" height="2"/><rect x="326" y="92" width="1" height="2"/><rect x="333" y="92" width="1" height="2"/><rect x="340" y="88" width="1" height="6"/><rect x="347" y="92" width="1" height="2"/><rect x="354" y="92" width="1" height="2"/><rect x="360" y="92" width="1" height="2"/><rect x="367" y="92" width="1" height="2"/><rect x="374" y="90" width="1" height="4"/><rect x="381" y="92" width="1" height="2"/><rect x="388" y="92" width="1" height="2"/><rect x="394" y="92" width="1" height="2"/><rect x="401" y="92" width="1" height="2"/><rect x="408" y="88" width="1" height="6"/><rect x="415" y="92" width="1" height="2"/><rect x="422" y="92" width="1" height="2"/><rect x="428" y="92" width="1" height="2"/><rect x="435" y="92" width="1" height="2"/><rect x="442" y="90" width="1" height="4"/><rect x="449" y="92" width="1" height="2"/><rect x="456" y="92" width="1" height="2"/><rect x="462" y="92" width="1" height="2"/><rect x="469" y="92" width="1" height="2"/><rect x="476" y="88" width="1" height="6"/><rect x="483" y="92" width="1" height="2"/><rect x="490" y="92" width="1" height="2"/><rect x="496" y="92" width="1" height="2"/><rect x="503" y="92" width="1" height="2"/><rect x="510" y="90" width="1" height="4"/><rect x="517" y="92" width="1" height="2"/><rect x="524" y="92" width="1" height="2"/><rect x="530" y="92" width="1" height="2"/><rect x="537" y="92" width="1" height="2"/><rect x="544" y="88" width="1" height="6"/><rect x="551" y="92" width="1" height="2"/><rect x="558" y="92" width="1" height="2"/><rect x="564" y="92" width="1" height="2"/><rect x="571" y="92" width="1" height="2"/><rect x="578" y="90" width="1" height="4"/><rect x="585" y="92" width="1" height="2"/><rect x="592" y="92" width="1" height="2"/><rect x="598" y="92" width="1" height="2"/><rect x="605" y="92" width="1" height="2"/><rect x="612" y="88" width="1" height="6"/><rect x="619" y="92" width="1" height="2"/><rect x="626" y="92" width="1" height="2"/><rect x="632" y="92" width="1" height="2"/><rect x="639" y="92" width="1" height="2"/><rect x="646" y="90" width="1" height="4"/><rect x="653" y="92" width="1" height="2"/><rect x="660" y="92" width="1" height="2"/><rect x="666" y="92" width="1" height="2"/><rect x="673" y="92" width="1" height="2"/><rect x="680" y="88" width="1" height="6"/><rect x="687" y="92" width="1" height="2"/><rect x="694" y="92" width="1" height="2"/><rect x="700" y="92" width="1" height="2"/><rect x="707" y="92" width="1" height="2"/><rect x="714" y="90" width="1" height="4"/><rect x="721" y="92" width="1" height="2"/><rect x="728" y="92" width="1" height="2"/><rect x="734" y="92" width="1" height="2"/><rect x="741" y="92" width="1" height="2"/><rect x="748" y="88" width="1" height="6"/><rect x="755" y="92" width="1" height="2"/><rect x="762" y="92" width="1" height="2"/><rect x="768" y="92" width="1" height="2"/><rect x="775" y="92" width="1" height="2"/><rect x="782" y="90" width="1" height="4"/><rect x="789" y="92" width="1" height="2"/><rect x="796" y="92" width="1" height="2"/><rect x="802" y="92" width="1" height="2"/><rect x="809" y="92" width="1" height="2"/><rect x="816" y="88" width="1" height="6"/><rect x="823" y="92" width="1" height="2"/><rect x="830" y="92" width="1" height="2"/><rect x="836" y="92" width="1" height="2"/><rect x="843" y="92" width="1" height="2"/><rect x="850" y="90" width="1" height="4"/><rect x="857" y="92" width="1" height="2"/><rect x="864" y="92" width="1" height="2"/><rect x="870" y="92" width="1" height="2"/><rect x="877" y="92" width="1" height="2"/><rect x="884" y="88" width="1" height="6"/><rect x="891" y="92" width="1" height="2"/><rect x="898" y="92" width="1" height="2"/><rect x="904" y="92" width="1" height="2"/><rect x="911" y="92" width="1" height="2"/><rect x="918" y="90" width="1" height="4"/><rect x="925" y="92" width="1" height="2"/><rect x="932" y="92" width="1" height="2"/><rect x="938" y="92" width="1" height="2"/><rect x="945" y="92" width="1" height="2"/><rect x="952" y="88" width="1" height="6"/><rect x="959" y="92" width="1" height="2"/><rect x="966" y="92" width="1" height="2"/><rect x="972" y="92" width="1" height="2"/><rect x="979" y="92" width="1" height="2"/><rect x="986" y="90" width="1" height="4"/><rect x="993" y="92" width="1" height="2"/><rect x="1000" y="92" width="1" height="2"/><rect x="1006" y="92" width="1" height="2"/><rect x="1013" y="92" width="1" height="2"/><rect x="1020" y="88" width="1" height="6"/><rect x="1027" y="92" width="1" height="2"/><rect x="1034" y="92" width="1" height="2"/><rect x="1040" y="92" width="1" height="2"/><rect x="1047" y="92" width="1" height="2"/><rect x="1054" y="90" width="1" height="4"/><rect x="1061" y="92" width="1" height="2"/><rect x="1068" y="92" width="1" height="2"/><rect x="295" y="95" width="2" height="1"/><rect x="295" y="102" width="2" height="1"/><rect x="295" y="109" width="2" height="1"/><rect x="291" y="116" width="6" height="1"/><rect x="295" y="122" width="2" height="1"/><rect x="295" y="129" width="2" height="1"/><rect x="295" y="136" width="2" height="1"/><rect x="295" y="143" width="2" height="1"/><rect x="293" y="149" width="4" height="1"/><rect x="295" y="156" width="2" height="1"/><rect x="295" y="163" width="2" height="1"/><rect x="295" y="170" width="2" height="1"/><rect x="295" y="177" width="2" height="1"/><rect x="291" y="183" width="6" height="1"/><rect x="295" y="190" width="2" height="1"/><rect x="295" y="197" width="2" height="1"/><rect x="295" y="204" width="2" height="1"/><rect x="295" y="211" width="2" height="1"/><rect x="293" y="218" width="4" height="1"/><rect x="295" y="224" width="2" height="1"/><rect x="295" y="231" width="2" height="1"/><rect x="295" y="238" width="2" height="1"/><rect x="295" y="245" width="2" height="1"/><rect x="291" y="252" width="6" height="1"/><rect x="295" y="258" width="2" height="1"/><rect x="295" y="265" width="2" height="1"/><rect x="295" y="272" width="2" height="1"/><rect x="295" y="279" width="2" height="1"/><rect x="293" y="286" width="4" height="1"/><rect x="295" y="292" width="2" height="1"/><rect x="295" y="299" width="2" height="1"/><rect x="295" y="306" width="2" height="1"/><rect x="295" y="313" width="2" height="1"/><rect x="291" y="320" width="6" height="1"/><rect x="295" y="326" width="2" height="1"/><rect x="295" y="333" width="2" height="1"/><rect x="295" y="340" width="2" height="1"/><rect x="295" y="347" width="2" height="1"/><rect x="293" y="354" width="4" height="1"/><rect x="295" y="360" width="2" height="1"/><rect x="295" y="367" width="2" height="1"/><rect x="295" y="374" width="2" height="1"/><rect x="295" y="381" width="2" height="1"/><rect x="291" y="388" width="6" height="1"/><rect x="295" y="394" width="2" height="1"/><rect x="295" y="401" width="2" height="1"/><rect x="295" y="408" width="2" height="1"/><rect x="295" y="415" width="2" height="1"/><rect x="293" y="422" width="4" height="1"/><rect x="295" y="428" width="2" height="1"/><rect x="295" y="435" width="2" height="1"/><rect x="295" y="442" width="2" height="1"/><rect x="295" y="449" width="2" height="1"/><rect x="291" y="456" width="6" height="1"/><rect x="295" y="462" width="2" height="1"/><rect x="295" y="469" width="2" height="1"/><rect x="295" y="476" width="2" height="1"/><rect x="295" y="483" width="2" height="1"/><rect x="293" y="490" width="4" height="1"/><rect x="295" y="496" width="2" height="1"/><rect x="295" y="503" width="2" height="1"/><rect x="295" y="510" width="2" height="1"/><rect x="295" y="517" width="2" height="1"/><rect x="291" y="524" width="6" height="1"/><rect x="295" y="530" width="2" height="1"/><rect x="295" y="537" width="2" height="1"/><rect x="295" y="544" width="2" height="1"/><rect x="295" y="551" width="2" height="1"/><rect x="293" y="558" width="4" height="1"/><rect x="295" y="564" width="2" height="1"/><rect x="295" y="571" width="2" height="1"/><rect x="295" y="578" width="2" height="1"/><rect x="295" y="585" width="2" height="1"/><rect x="291" y="592" width="6" height="1"/><rect x="295" y="598" width="2" height="1"/><rect x="295" y="605" width="2" height="1"/><rect x="295" y="612" width="2" height="1"/><rect x="295" y="619" width="2" height="1"/><rect x="293" y="626" width="4" height="1"/><rect x="295" y="632" width="2" height="1"/><rect x="295" y="639" width="2" height="1"/><rect x="295" y="646" width="2" height="1"/><rect x="295" y="653" width="2" height="1"/><rect x="291" y="660" width="6" height="1"/><rect x="295" y="666" width="2" height="1"/><rect x="295" y="673" width="2" height="1"/><rect x="295" y="680" width="2" height="1"/></g>
<g font-family="Liberation Sans" font-size="11" fill="#000"><text x="340.5" y="86" text-anchor="middle">-1000</text><text x="408.5" y="86" text-anchor="middle">-800</text><text x="476.5" y="86" text-anchor="middle">-600</text><text x="544.5" y="86" text-anchor="middle">-400</text><text x="612.5" y="86" text-anchor="middle">-200</text><text x="680.5" y="86" text-anchor="middle">0</text><text x="748.5" y="86" text-anchor="middle">200</text><text x="816.5" y="86" text-anchor="middle">400</text><text x="884.5" y="86" text-anchor="middle">600</text><text x="952.5" y="86" text-anchor="middle">800</text><text transform="translate(289,116.0) rotate(-90)" text-anchor="middle">800</text><text transform="translate(289,184.0) rotate(-90)" text-anchor="middle">600</text><text transform="translate(289,252.0) rotate(-90)" text-anchor="middle">400</text><text transform="translate(289,320.0) rotate(-90)" text-anchor="middle">200</text><text transform="translate(289,388.0) rotate(-90)" text-anchor="middle">0</text><text transform="translate(289,456.0) rotate(-90)" text-anchor="middle">-200</text><text transform="translate(289,524.0) rotate(-90)" text-anchor="middle">-400</text><text transform="translate(289,592.0) rotate(-90)" text-anchor="middle">-600</text><text transform="translate(289,660.0) rotate(-90)" text-anchor="middle">-800</text></g>
</svg><svg class="a" style="left:0;top:0" width="1366" height="767" viewBox="0 0 1366 767">
<defs>
<filter id="b1" x="-20%" y="-20%" width="140%" height="140%"><feGaussianBlur stdDeviation="0.7"/></filter>
<filter id="b15" x="-20%" y="-20%" width="140%" height="140%"><feGaussianBlur stdDeviation="1.15"/></filter>
<filter id="b2" x="-20%" y="-20%" width="140%" height="140%"><feGaussianBlur stdDeviation="1.6"/></filter>
<filter id="b3" x="-20%" y="-20%" width="140%" height="140%"><feGaussianBlur stdDeviation="3"/></filter>
<linearGradient id="gfl1" x1="0" y1="0" x2="0" y2="1"><stop offset="0" stop-color="#2c2c2c"/><stop offset="1" stop-color="#545454"/></linearGradient>
<linearGradient id="gfl2" x1="0" y1="0" x2="0" y2="1"><stop offset="0" stop-color="#424242"/><stop offset="1" stop-color="#6a6a6a"/></linearGradient>
<linearGradient id="gfl3" x1="0" y1="0" x2="0" y2="1"><stop offset="0" stop-color="#545454"/><stop offset="1" stop-color="#767676"/></linearGradient>
<linearGradient id="gfloor" x1="0" y1="0" x2="0" y2="1"><stop offset="0" stop-color="#383838"/><stop offset="0.45" stop-color="#5a5a5a"/><stop offset="1" stop-color="#7c7c7c"/></linearGradient>
<linearGradient id="gent" gradientUnits="userSpaceOnUse" x1="0" y1="228.6" x2="0" y2="252.2"><stop offset="0" stop-color="#8c8c8c"/><stop offset="0.05" stop-color="#b6b6b6"/><stop offset="0.17" stop-color="#b2b2b2"/><stop offset="0.2" stop-color="#707070"/><stop offset="0.28" stop-color="#4e4e4e"/><stop offset="0.5" stop-color="#545454"/><stop offset="0.74" stop-color="#606060"/><stop offset="0.76" stop-color="#4c4c4c"/><stop offset="0.8" stop-color="#c2c2c2"/><stop offset="0.9" stop-color="#bcbcbc"/><stop offset="1" stop-color="#8a8a8a"/></linearGradient>
<radialGradient id="garch" gradientUnits="userSpaceOnUse" cx="682.5" cy="296" r="93.5"><stop offset="0.78" stop-color="#8a8a8a"/><stop offset="0.80" stop-color="#bababa"/><stop offset="0.825" stop-color="#c0c0c0"/><stop offset="0.832" stop-color="#4c4c4c"/><stop offset="0.845" stop-color="#606060"/><stop offset="0.9" stop-color="#545454"/><stop offset="0.94" stop-color="#4e4e4e"/><stop offset="0.955" stop-color="#707070"/><stop offset="0.96" stop-color="#b2b2b2"/><stop offset="0.99" stop-color="#b6b6b6"/><stop offset="1" stop-color="#8c8c8c"/></radialGradient>
<linearGradient id="gcol" x1="0" y1="0" x2="1" y2="0"><stop offset="0" stop-color="#5e5e5e"/><stop offset="0.35" stop-color="#b8b8b8"/><stop offset="0.6" stop-color="#a8a8a8"/><stop offset="1" stop-color="#545454"/></linearGradient>
<linearGradient id="gcap" x1="0" y1="0" x2="1" y2="0"><stop offset="0" stop-color="#6a6a6a"/><stop offset="0.3" stop-color="#bcbcbc"/><stop offset="0.55" stop-color="#b0b0b0"/><stop offset="1" stop-color="#5c5c5c"/></linearGradient>
<linearGradient id="gcap2" x1="0" y1="0" x2="1" y2="0"><stop offset="0" stop-color="#707070"/><stop offset="0.35" stop-color="#c2c2c2"/><stop offset="0.6" stop-color="#b0b0b0"/><stop offset="1" stop-color="#606060"/></linearGradient>
<linearGradient id="gbase" x1="0" y1="0" x2="1" y2="0"><stop offset="0" stop-color="#7a7a7a"/><stop offset="0.4" stop-color="#c4c4c4"/><stop offset="0.65" stop-color="#b4b4b4"/><stop offset="1" stop-color="#747474"/></linearGradient>
<linearGradient id="gbase2" x1="0" y1="0" x2="1" y2="0"><stop offset="0" stop-color="#8a8a8a"/><stop offset="0.4" stop-color="#d0d0d0"/><stop offset="0.65" stop-color="#c0c0c0"/><stop offset="1" stop-color="#808080"/></linearGradient>
<pattern id="ptwist" width="10.6" height="3.7" patternUnits="userSpaceOnUse" patternTransform="translate(599.2,280) skewY(33)"><rect width="10.6" height="1.2" y="0" fill="#2e2e2e" opacity="0.3"/><rect width="10.6" height="1.1" y="1.9" fill="#fff" opacity="0.13"/></pattern>
<pattern id="ptwistR" width="10.6" height="3.7" patternUnits="userSpaceOnUse" patternTransform="translate(755.9,280) skewY(-33)"><rect width="10.6" height="1.2" y="0" fill="#2e2e2e" opacity="0.3"/><rect width="10.6" height="1.1" y="1.9" fill="#fff" opacity="0.13"/></pattern>
<linearGradient id="gdoor" gradientUnits="userSpaceOnUse" x1="620" y1="0" x2="680" y2="0"><stop offset="0" stop-color="#0e0e0e"/><stop offset="0.1" stop-color="#1e1e1e"/><stop offset="0.25" stop-color="#3c3c3c"/><stop offset="0.34" stop-color="#4e4e4e"/><stop offset="0.6" stop-color="#484848"/><stop offset="0.75" stop-color="#3a3a3a"/><stop offset="0.88" stop-color="#282828"/><stop offset="1" stop-color="#101010"/></linearGradient>
<linearGradient id="gdfloor" x1="0" y1="0" x2="0" y2="1"><stop offset="0" stop-color="#1c1c1c"/><stop offset="1" stop-color="#3e3e3e"/></linearGradient>
<radialGradient id="gros"><stop offset="0" stop-color="#777"/><stop offset="0.55" stop-color="#4a4a44"/><stop offset="0.85" stop-color="#33332c"/><stop offset="1" stop-color="#55553c"/></radialGradient>
<radialGradient id="grosc" cx="0.45" cy="0.4"><stop offset="0" stop-color="#a8a8a8"/><stop offset="0.7" stop-color="#8a8a8a"/><stop offset="1" stop-color="#5c5c5c"/></radialGradient>
<linearGradient id="gfig" gradientUnits="userSpaceOnUse" x1="640" y1="0" x2="745" y2="0"><stop offset="0" stop-color="#c2c2c2"/><stop offset="0.45" stop-color="#cacaca"/><stop offset="0.75" stop-color="#b0b0b0"/><stop offset="1" stop-color="#8a8a8a"/></linearGradient>
<linearGradient id="gleaf" x1="0" y1="1" x2="0" y2="0"><stop offset="0" stop-color="#a8a8a8"/><stop offset="0.55" stop-color="#8c8c8c"/><stop offset="1" stop-color="#6a6a6a"/></linearGradient>
<linearGradient id="gscroll0" x1="0" y1="0" x2="1" y2="0"><stop offset="0" stop-color="#d4d4d4"/><stop offset="0.3" stop-color="#a8a8a8"/><stop offset="1" stop-color="#8a8a8a"/></linearGradient>
<linearGradient id="gscroll1" x1="1" y1="0" x2="0" y2="0"><stop offset="0" stop-color="#d4d4d4"/><stop offset="0.3" stop-color="#a8a8a8"/><stop offset="1" stop-color="#8a8a8a"/></linearGradient>
<linearGradient id="gfanl" x1="0" y1="0" x2="1" y2="0"><stop offset="0" stop-color="#7a7a7a"/><stop offset="0.5" stop-color="#b0b0b0"/><stop offset="1" stop-color="#808080"/></linearGradient>
<linearGradient id="gfin" x1="0" y1="0" x2="1" y2="0"><stop offset="0" stop-color="#808080"/><stop offset="0.45" stop-color="#d0d0d0"/><stop offset="1" stop-color="#707070"/></linearGradient>
<linearGradient id="gstepA" x1="0" y1="0" x2="1" y2="1"><stop offset="0" stop-color="#9c9c9c"/><stop offset="0.6" stop-color="#7a7a7a"/><stop offset="1" stop-color="#626262"/></linearGradient>
<linearGradient id="gstepB" x1="0" y1="0" x2="1" y2="0.6"><stop offset="0" stop-color="#4e4e4e"/><stop offset="0.6" stop-color="#686868"/><stop offset="1" stop-color="#5a5a5a"/></linearGradient>
<linearGradient id="gstep" x1="0" y1="0" x2="0" y2="1"><stop offset="0" stop-color="#8e8e8e"/><stop offset="1" stop-color="#5a5a5a"/></linearGradient>
<clipPath id="cfig"><path d="M694.7,275.5C697.7,274.9 701.2,275.0 703.8,276.4C706.4,277.8 708.8,280.3 710.2,283.7C711.6,287.1 711.2,293.1 712.0,296.5C712.8,299.9 713.1,302.3 714.8,303.8C716.5,305.3 719.3,303.8 722.0,305.6C724.7,307.4 728.6,312.1 731.2,314.8C733.8,317.5 736.4,319.0 737.6,322.0C738.8,325.0 737.7,329.5 738.3,333.0C738.9,336.5 740.0,338.1 741.0,343.0C742.0,347.9 743.8,358.3 744.4,362.6C745.0,366.9 745.0,365.8 744.4,369.0C743.8,372.2 741.6,376.6 741.0,382.0C740.4,387.4 740.7,393.7 740.5,401.7C740.3,409.7 740.2,422.8 739.9,430.0C739.6,437.2 738.9,438.1 738.5,444.8C738.1,451.5 738.1,463.3 737.6,470.0C737.1,476.7 736.9,480.7 735.8,485.0C734.7,489.3 733.5,492.7 731.2,496.0C728.9,499.3 724.6,503.2 722.0,505.0C719.4,506.8 716.9,505.2 715.7,507.0C714.5,508.8 716.8,514.2 714.8,516.0C712.8,517.8 706.7,518.5 703.8,517.8C700.9,517.1 698.3,514.0 697.4,512.0C696.5,510.0 699.7,507.3 698.3,506.0C696.9,504.7 693.2,504.8 689.2,504.0C685.2,503.2 677.8,503.4 674.6,501.4C671.4,499.4 670.8,498.4 670.0,492.0C669.2,485.6 669.7,473.3 670.0,463.0C670.3,452.7 672.3,438.0 672.0,430.0C671.7,422.0 669.7,419.7 668.2,414.8C666.7,409.9 664.8,404.8 663.0,400.4C661.2,396.0 659.2,392.1 657.7,388.7C656.2,385.3 655.5,381.1 653.8,380.2C652.1,379.3 649.4,383.2 647.3,383.5C645.2,383.8 642.6,384.6 641.4,382.2C640.2,379.8 640.2,373.2 640.0,369.0C639.8,364.8 641.9,357.8 640.0,356.7C638.1,355.6 631.3,362.8 628.4,362.6C625.5,362.4 623.1,357.6 622.8,355.4C622.5,353.2 623.6,350.8 626.4,349.6C629.2,348.4 634.7,349.3 639.5,348.3C644.3,347.3 650.2,345.1 655.0,343.7C659.8,342.3 665.2,341.4 668.0,339.8C670.8,338.2 670.9,335.6 672.0,334.0C673.1,332.4 673.4,332.2 674.7,330.0C676.0,327.8 678.2,323.5 680.0,321.0C681.8,318.5 684.4,316.1 685.6,314.8C686.8,313.5 687.7,315.1 687.4,313.0C687.1,310.9 684.6,306.3 683.7,302.0C682.8,297.7 681.7,291.1 682.0,287.4C682.3,283.7 683.5,282.0 685.6,280.0C687.7,278.0 691.7,276.1 694.7,275.5Z"/></clipPath>
<clipPath id="cfloor"><rect x="583" y="518" width="199" height="58"/></clipPath>
<clipPath id="cdoor"><rect x="620" y="266" width="60" height="253"/></clipPath>
<clipPath id="ctymp"><rect x="600" y="200" width="170" height="52"/></clipPath>
</defs>
<!-- page -->
<rect x="579.5" y="116.5" width="205" height="546" fill="#ffff80" stroke="#000" stroke-width="1" shape-rendering="crispEdges"/>
<!-- floor -->
<rect x="583" y="518" width="199" height="58" fill="#555"/><rect x="583" y="518" width="199" height="26" fill="url(#gfl1)"/><rect x="583" y="543" width="199" height="21" fill="url(#gfl2)"/><rect x="583" y="563" width="199" height="13" fill="url(#gfl3)"/>
<g clip-path="url(#cfloor)" stroke="#2a2a2a" stroke-width="0.9" opacity="0.8" fill="none"><path d="M544.6,518 L490.6,576"/><path d="M580.3,518 L526.3,576"/><path d="M616.0,518 L562.0,576"/><path d="M651.7,518 L597.7,576"/><path d="M687.4,518 L633.4,576"/><path d="M723.1,518 L669.1,576"/><path d="M758.8,518 L704.8,576"/><path d="M794.5,518 L740.5,576"/><path d="M830.2,518 L776.2,576"/><path d="M865.9,518 L811.9,576"/><path d="M901.6,518 L847.6,576"/><path d="M583,543 H782 M583,563.5 H782"/></g>
<!-- arch -->
<circle cx="682.5" cy="296" r="73" fill="#ffff80" clip-path="url(#ctymp)"/>
<g clip-path="url(#ctymp)"><circle cx="682.5" cy="296" r="83.25" fill="none" stroke="url(#garch)" stroke-width="20.5"/>
<path transform="translate(682.5,296) rotate(-49.50) translate(0,-77.6)" d="M-3.15,0 V-5.10 C-3.15,-7.96 -1.10,-9.18 0,-10.20 C1.10,-9.18 3.15,-7.96 3.15,-5.10 V0 Z" fill="url(#gleaf)"/><path transform="translate(682.5,296) rotate(-44.55) translate(0,-77.6)" d="M-3.15,0 V-5.10 C-3.15,-7.96 -1.10,-9.18 0,-10.20 C1.10,-9.18 3.15,-7.96 3.15,-5.10 V0 Z" fill="url(#gleaf)"/><path transform="translate(682.5,296) rotate(-39.60) translate(0,-77.6)" d="M-3.15,0 V-5.10 C-3.15,-7.96 -1.10,-9.18 0,-10.20 C1.10,-9.18 3.15,-7.96 3.15,-5.10 V0 Z" fill="url(#gleaf)"/><path transform="translate(682.5,296) rotate(-34.65) translate(0,-77.6)" d="M-3.15,0 V-5.10 C-3.15,-7.96 -1.10,-9.18 0,-10.20 C1.10,-9.18 3.15,-7.96 3.15,-5.10 V0 Z" fill="url(#gleaf)"/><path transform="translate(682.5,296) rotate(-29.70) translate(0,-77.6)" d="M-3.15,0 V-5.10 C-3.15,-7.96 -1.10,-9.18 0,-10.20 C1.10,-9.18 3.15,-7.96 3.15,-5.10 V0 Z" fill="url(#gleaf)"/><path transform="translate(682.5,296) rotate(-24.75) translate(0,-77.6)" d="M-3.15,0 V-5.10 C-3.15,-7.96 -1.10,-9.18 0,-10.20 C1.10,-9.18 3.15,-7.96 3.15,-5.10 V0 Z" fill="url(#gleaf)"/><path transform="translate(682.5,296) rotate(-19.80) translate(0,-77.6)" d="M-3.15,0 V-5.10 C-3.15,-7.96 -1.10,-9.18 0,-10.20 C1.10,-9.18 3.15,-7.96 3.15,-5.10 V0 Z" fill="url(#gleaf)"/><path transform="translate(682.5,296) rotate(-14.85) translate(0,-77.6)" d="M-3.15,0 V-5.10 C-3.15,-7.96 -1.10,-9.18 0,-10.20 C1.10,-9.18 3.15,-7.96 3.15,-5.10 V0 Z" fill="url(#gleaf)"/><path transform="translate(682.5,296) rotate(-9.90) translate(0,-77.6)" d="M-3.15,0 V-5.10 C-3.15,-7.96 -1.10,-9.18 0,-10.20 C1.10,-9.18 3.15,-7.96 3.15,-5.10 V0 Z" fill="url(#gleaf)"/><path transform="translate(682.5,296) rotate(-4.95) translate(0,-77.6)" d="M-3.15,0 V-5.10 C-3.15,-7.96 -1.10,-9.18 0,-10.20 C1.10,-9.18 3.15,-7.96 3.15,-5.10 V0 Z" fill="url(#gleaf)"/><path transform="translate(682.5,296) rotate(0.00) translate(0,-77.6)" d="M-3.15,0 V-5.10 C-3.15,-7.96 -1.10,-9.18 0,-10.20 C1.10,-9.18 3.15,-7.96 3.15,-5.10 V0 Z" fill="url(#gleaf)"/><path transform="translate(682.5,296) rotate(4.95) translate(0,-77.6)" d="M-3.15,0 V-5.10 C-3.15,-7.96 -1.10,-9.18 0,-10.20 C1.10,-9.18 3.15,-7.96 3.15,-5.10 V0 Z" fill="url(#gleaf)"/><path transform="translate(682.5,296) rotate(9.90) translate(0,-77.6)" d="M-3.15,0 V-5.10 C-3.15,-7.96 -1.10,-9.18 0,-10.20 C1.10,-9.18 3.15,-7.96 3.15,-5.10 V0 Z" fill="url(#gleaf)"/><path transform="translate(682.5,296) rotate(14.85) translate(0,-77.6)" d="M-3.15,0 V-5.10 C-3.15,-7.96 -1.10,-9.18 0,-10.20 C1.10,-9.18 3.15,-7.96 3.15,-5.10 V0 Z" fill="url(#gleaf)"/><path transform="translate(682.5,296) rotate(19.80) translate(0,-77.6)" d="M-3.15,0 V-5.10 C-3.15,-7.96 -1.10,-9.18 0,-10.20 C1.10,-9.18 3.15,-7.96 3.15,-5.10 V0 Z" fill="url(#gleaf)"/><path transform="translate(682.5,296) rotate(24.75) translate(0,-77.6)" d="M-3.15,0 V-5.10 C-3.15,-7.96 -1.10,-9.18 0,-10.20 C1.10,-9.18 3.15,-7.96 3.15,-5.10 V0 Z" fill="url(#gleaf)"/><path transform="translate(682.5,296) rotate(29.70) translate(0,-77.6)" d="M-3.15,0 V-5.10 C-3.15,-7.96 -1.10,-9.18 0,-10.20 C1.10,-9.18 3.15,-7.96 3.15,-5.10 V0 Z" fill="url(#gleaf)"/><path transform="translate(682.5,296) rotate(34.65) translate(0,-77.6)" d="M-3.15,0 V-5.10 C-3.15,-7.96 -1.10,-9.18 0,-10.20 C1.10,-9.18 3.15,-7.96 3.15,-5.10 V0 Z" fill="url(#gleaf)"/><path transform="translate(682.5,296) rotate(39.60) translate(0,-77.6)" d="M-3.15,0 V-5.10 C-3.15,-7.96 -1.10,-9.18 0,-10.20 C1.10,-9.18 3.15,-7.96 3.15,-5.10 V0 Z" fill="url(#gleaf)"/><path transform="translate(682.5,296) rotate(44.55) translate(0,-77.6)" d="M-3.15,0 V-5.10 C-3.15,-7.96 -1.10,-9.18 0,-10.20 C1.10,-9.18 3.15,-7.96 3.15,-5.10 V0 Z" fill="url(#gleaf)"/><path transform="translate(682.5,296) rotate(49.50) translate(0,-77.6)" d="M-3.15,0 V-5.10 C-3.15,-7.96 -1.10,-9.18 0,-10.20 C1.10,-9.18 3.15,-7.96 3.15,-5.10 V0 Z" fill="url(#gleaf)"/></g>
<!-- entablature -->
<path d="M583,228.6 H617.5 L624.5,252.2 H583 Z" fill="url(#gent)"/>
<path d="M782,228.6 H747.5 L740.5,252.2 H782 Z" fill="url(#gent)"/>
<path transform="translate(586.8,246.2)" d="M-3.15,0 V-5.40 C-3.15,-8.42 -1.10,-9.72 0,-10.80 C1.10,-9.72 3.15,-8.42 3.15,-5.40 V0 Z" fill="url(#gleaf)"/><path transform="translate(778.2,246.2)" d="M-3.15,0 V-5.40 C-3.15,-8.42 -1.10,-9.72 0,-10.80 C1.10,-9.72 3.15,-8.42 3.15,-5.40 V0 Z" fill="url(#gleaf)"/><path transform="translate(593.7,246.2)" d="M-3.15,0 V-5.40 C-3.15,-8.42 -1.10,-9.72 0,-10.80 C1.10,-9.72 3.15,-8.42 3.15,-5.40 V0 Z" fill="url(#gleaf)"/><path transform="translate(771.3,246.2)" d="M-3.15,0 V-5.40 C-3.15,-8.42 -1.10,-9.72 0,-10.80 C1.10,-9.72 3.15,-8.42 3.15,-5.40 V0 Z" fill="url(#gleaf)"/><path transform="translate(600.6,246.2)" d="M-3.15,0 V-5.40 C-3.15,-8.42 -1.10,-9.72 0,-10.80 C1.10,-9.72 3.15,-8.42 3.15,-5.40 V0 Z" fill="url(#gleaf)"/><path transform="translate(764.4,246.2)" d="M-3.15,0 V-5.40 C-3.15,-8.42 -1.10,-9.72 0,-10.80 C1.10,-9.72 3.15,-8.42 3.15,-5.40 V0 Z" fill="url(#gleaf)"/><path transform="translate(607.5,246.2)" d="M-3.15,0 V-5.40 C-3.15,-8.42 -1.10,-9.72 0,-10.80 C1.10,-9.72 3.15,-8.42 3.15,-5.40 V0 Z" fill="url(#gleaf)"/><path transform="translate(757.5,246.2)" d="M-3.15,0 V-5.40 C-3.15,-8.42 -1.10,-9.72 0,-10.80 C1.10,-9.72 3.15,-8.42 3.15,-5.40 V0 Z" fill="url(#gleaf)"/><path transform="translate(614.4,246.2)" d="M-3.15,0 V-5.40 C-3.15,-8.42 -1.10,-9.72 0,-10.80 C1.10,-9.72 3.15,-8.42 3.15,-5.40 V0 Z" fill="url(#gleaf)"/><path transform="translate(750.6,246.2)" d="M-3.15,0 V-5.40 C-3.15,-8.42 -1.10,-9.72 0,-10.80 C1.10,-9.72 3.15,-8.42 3.15,-5.40 V0 Z" fill="url(#gleaf)"/><path transform="translate(621.3,246.2)" d="M-3.15,0 V-5.40 C-3.15,-8.42 -1.10,-9.72 0,-10.80 C1.10,-9.72 3.15,-8.42 3.15,-5.40 V0 Z" fill="url(#gleaf)"/><path transform="translate(743.7,246.2)" d="M-3.15,0 V-5.40 C-3.15,-8.42 -1.10,-9.72 0,-10.80 C1.10,-9.72 3.15,-8.42 3.15,-5.40 V0 Z" fill="url(#gleaf)"/>
<g fill="#1a1408"><polygon points="636.7,250.0 637.5,252.5 640.1,252.5 638.0,254.0 638.8,256.5 636.7,255.0 634.6,256.5 635.4,254.0 633.3,252.5 635.9,252.5"/><polygon points="654.0,236.7 654.8,239.2 657.4,239.2 655.3,240.7 656.1,243.2 654.0,241.7 651.9,243.2 652.7,240.7 650.6,239.2 653.2,239.2"/><polygon points="659.0,251.1 659.8,253.6 662.4,253.6 660.3,255.1 661.1,257.6 659.0,256.1 656.9,257.6 657.7,255.1 655.6,253.6 658.2,253.6"/><polygon points="672.5,233.6 673.3,236.1 675.9,236.1 673.8,237.6 674.6,240.1 672.5,238.6 670.4,240.1 671.2,237.6 669.1,236.1 671.7,236.1"/><polygon points="677.7,248.8 678.5,251.3 681.1,251.3 679.0,252.8 679.8,255.3 677.7,253.8 675.6,255.3 676.4,252.8 674.3,251.3 676.9,251.3"/><polygon points="689.4,228.9 690.2,231.4 692.8,231.4 690.7,232.9 691.5,235.4 689.4,233.9 687.3,235.4 688.1,232.9 686.0,231.4 688.6,231.4"/><polygon points="691.0,242.7 691.8,245.2 694.4,245.2 692.3,246.7 693.1,249.2 691.0,247.7 688.9,249.2 689.7,246.7 687.6,245.2 690.2,245.2"/><polygon points="699.3,252.7 700.1,255.2 702.7,255.2 700.6,256.7 701.4,259.2 699.3,257.7 697.2,259.2 698.0,256.7 695.9,255.2 698.5,255.2"/><polygon points="711.3,235.9 712.1,238.4 714.7,238.4 712.6,239.9 713.4,242.4 711.3,240.9 709.2,242.4 710.0,239.9 707.9,238.4 710.5,238.4"/><polygon points="723.0,250.4 723.8,252.9 726.4,252.9 724.3,254.4 725.1,256.9 723.0,255.4 720.9,256.9 721.7,254.4 719.6,252.9 722.2,252.9"/></g>
<!-- columns -->
<path d="M586.7,252 L622.3,252 L610.8,273.4 L598.2,273.4 Z" fill="url(#gcap)"/><path d="M588.9,256 H620.1" stroke="#fff" stroke-width="1" opacity="0.35"/><path d="M589.4,257.2 H619.6" stroke="#333" stroke-width="0.9" opacity="0.3"/><path d="M591.7,261 H617.3" stroke="#fff" stroke-width="1" opacity="0.3"/><path d="M592.2,262.2 H616.8" stroke="#333" stroke-width="0.9" opacity="0.3"/><path d="M594.4,266 H614.6" stroke="#fff" stroke-width="1" opacity="0.3"/><path d="M594.9,267.2 H614.1" stroke="#333" stroke-width="0.9" opacity="0.3"/><path d="M593.5,273 L615.5,273 L610.7,280.4 L598.3,280.4 Z" fill="url(#gcap2)"/><rect x="599.2" y="280" width="10.6" height="234" fill="url(#gcol)"/><rect x="599.2" y="280" width="10.6" height="234" fill="url(#ptwist)"/><path d="M598.0,512 L611.0,512 L615.0,516 L615.0,522 L594.0,522 L594.0,516 Z" fill="url(#gbase)"/><path d="M597.0,522 L612.0,522 L612.5,531 C616.5,534 620.5,538 621.0,544 L588.0,544 C588.5,538 592.5,534 596.5,531 Z" fill="url(#gbase)"/><rect x="588.0" y="540" width="33" height="4.5" fill="url(#gbase2)"/>
<path d="M743.4000000000001,252 L779.0,252 L767.5,273.4 L754.9000000000001,273.4 Z" fill="url(#gcap)"/><path d="M745.6,256 H776.8" stroke="#fff" stroke-width="1" opacity="0.35"/><path d="M746.1,257.2 H776.3" stroke="#333" stroke-width="0.9" opacity="0.3"/><path d="M748.4,261 H774.0" stroke="#fff" stroke-width="1" opacity="0.3"/><path d="M748.9,262.2 H773.5" stroke="#333" stroke-width="0.9" opacity="0.3"/><path d="M751.1,266 H771.3" stroke="#fff" stroke-width="1" opacity="0.3"/><path d="M751.6,267.2 H770.8" stroke="#333" stroke-width="0.9" opacity="0.3"/><path d="M750.2,273 L772.2,273 L767.4000000000001,280.4 L755.0,280.4 Z" fill="url(#gcap2)"/><rect x="755.9000000000001" y="280" width="10.6" height="234" fill="url(#gcol)"/><rect x="755.9000000000001" y="280" width="10.6" height="234" fill="url(#ptwistR)"/><path d="M754.7,512 L767.7,512 L771.7,516 L771.7,522 L750.7,522 L750.7,516 Z" fill="url(#gbase)"/><path d="M753.7,522 L768.7,522 L769.2,531 C773.2,534 777.2,538 777.7,544 L744.7,544 C745.2,538 749.2,534 753.2,531 Z" fill="url(#gbase)"/><rect x="744.7" y="540" width="33" height="4.5" fill="url(#gbase2)"/>
<!-- inner frame -->
<rect x="618.3" y="264.3" width="129" height="256" fill="none" stroke="#888" stroke-width="3.8"/>
<rect x="618.3" y="264.3" width="129" height="256" fill="none" stroke="#a8a8a8" stroke-width="1.2"/>
<!-- dark interior -->
<rect x="620" y="266" width="60" height="253" fill="url(#gdoor)"/>
<g clip-path="url(#cdoor)" fill="none">
<path d="M646.2,520 V300 C646.2,285 642.5,272 634,265" stroke="#6e6e6e" stroke-width="4.4" filter="url(#b1)"/>
<path d="M640.7,520 V300 C640.7,284 634,271 621,265.5" stroke="#242424" stroke-width="1.3" filter="url(#b1)"/>
<path d="M652,520 V300 C652,286 649,273 641,265" stroke="#5a5a5a" stroke-width="1.8" filter="url(#b1)"/>
<path d="M649.6,520 V300 C649.6,286 646.5,273 638.5,265" stroke="#2a2a2a" stroke-width="1" />
<path d="M653.8,520 V300 C653.8,286 651,273 643.5,265" stroke="#262626" stroke-width="1" />
<rect x="660.3" y="288.5" width="7" height="41" stroke="#5a5a5a" stroke-width="1"/>
<rect x="661.8" y="290" width="4" height="38" stroke="#222" stroke-width="0.8"/>
<path d="M620,294.5 H638.5 M620,312 H638.5" stroke="#3e3e3e" stroke-width="1.6" filter="url(#b1)"/>
<path d="M623,303 C626,300 630,305 634,302" stroke="#484848" stroke-width="1.6" filter="url(#b1)"/>
<path d="M620,436 L638.5,432 M620,452 L638.5,447" stroke="#484848" stroke-width="1.5" filter="url(#b1)"/>
<path d="M624,444 C627,441 631,445 634,442" stroke="#444" stroke-width="1.3" filter="url(#b1)"/>
</g>
<rect x="680" y="470" width="66.5" height="49" fill="url(#gdfloor)"/>
<!-- steps -->
<path d="M620,478 L640,466.5 L657.2,468 L657.2,477 L620,500.5 Z" fill="url(#gstepA)"/>
<path d="M620,500.5 L657.2,477 L657.2,478.5 L620,503.5 Z" fill="#2c2c2c"/>
<path d="M620,503.9 L657.2,477.6 L667.8,477.6 L667.8,489.3 L644.3,518.5 L620,518.5 Z" fill="url(#gstepB)"/>
<path d="M620,503.9 L622,503 L646,517 L644.3,518.5 L620,518.5 Z" fill="#6c6c6c" opacity="0.7"/>
<path d="M657.2,468 V477" stroke="#555" stroke-width="0.8"/>
<!-- figure -->
<g clip-path="url(#cfig)">
<rect x="615" y="270" width="135" height="252" fill="#c0c0c0"/>
<g filter="url(#b2)">
<!-- right dark side -->
<path d="M722,308 C734,318 742,340 746,370 L744,470 L738,500 L718,508 C720,470 718,420 720,380 C720,355 718,335 714,322 Z" fill="#a2a2a2"/>
<path d="M732,318 C739,330 747,350 747,370 L744,400 L743,470 L741,500 L730,508 C733,470 731,420 733,380 C734,355 730,335 726,322 Z" fill="#7a7a7a"/>
<path d="M716,330 C722,360 720,400 722,440 L722,505 L712,505 C712,460 710,400 712,360 Z" fill="#c6c6c6"/>
<!-- sleeve / left light mass -->
<path d="M640,350 C655,342 670,338 684,336 C694,345 700,362 700,380 C696,398 684,408 672,412 C662,400 650,390 642,378 Z" fill="#d6d6d6"/>
<path d="M672,420 L700,410 L704,500 L674,500 Z" fill="#cccccc"/>
<!-- chest -->
<path d="M684,318 C692,322 704,324 712,320 L716,345 C708,352 694,350 684,338 Z" fill="#b8b8b8"/>
<!-- head -->
<ellipse cx="696" cy="290" rx="13" ry="14" fill="#bababa"/>
<ellipse cx="691.5" cy="289.5" rx="5.5" ry="6" fill="#cccccc"/>
<ellipse cx="694.5" cy="298.300" rx="4.600" ry="1.700" fill="#979797"/>
<ellipse cx="690.5" cy="308" rx="5" ry="6.500" fill="#c4c4c4"/>
<path d="M706,280 C712,288 712,298 718,306 L710,308 C706,300 704,290 702,282 Z" fill="#9a9a9a"/>
<ellipse cx="701" cy="318" rx="4.800" ry="3" fill="#7e7e7e"/>
<path d="M703.5,279 C707,286 706,294 709,302" stroke="#8e8e8e" stroke-width="1.600" fill="none"/>
<path d="M686,300 C686,306 687,312 690,316.500 C693,313 696,308 697,302 Z" fill="#cacaca"/>
<path d="M689,300.500 L688.500,304" stroke="#d8d8d8" stroke-width="1.600" fill="none"/>
<!-- collar fold -->
<path d="M705,327 C712,322 724,318 734,322" stroke="#6e6e6e" stroke-width="2.600" fill="none"/>
<path d="M722,306 C730,312 736,318 739,326" stroke="#bcbcbc" stroke-width="3" fill="none"/>
<!-- hand holding staff -->
<ellipse cx="690" cy="335" rx="4.500" ry="5" fill="#d0d0d0"/>
<path d="M698,472 L738,480 L736,494 L722,506 L700,506 Z" fill="#868686"/>
</g>
<g filter="url(#b15)" fill="none">
<!-- sleeve drape folds -->
<path d="M652,352 C660,366 676,372 690,362" stroke="#8a8a8a" stroke-width="2.600"/>
<path d="M648,360 C658,378 678,386 694,372" stroke="#868686" stroke-width="2.600"/>
<path d="M648,372 C660,392 680,398 696,384" stroke="#848484" stroke-width="2.800"/>
<path d="M656,390 C666,402 682,406 696,396" stroke="#888" stroke-width="2.600"/>
<path d="M654,358 C664,372 678,378 692,368" stroke="#e0e0e0" stroke-width="2.400"/>
<path d="M652,368 C662,386 680,392 695,379" stroke="#e2e2e2" stroke-width="2.400"/>
<path d="M660,396 C668,406 682,411 696,402" stroke="#dedede" stroke-width="2.400"/>
<path d="M642,362 L643,381" stroke="#909090" stroke-width="1.200"/>
<!-- sleeve/torso boundary -->
<path d="M697,340 C702,360 700,392 690,412 C684,424 684,440 686,460" stroke="#808080" stroke-width="2.200"/>
<!-- lower robe vertical folds -->
<path d="M676,420 C675,450 676,480 677,500" stroke="#8a8a8a" stroke-width="1.500"/>
<path d="M681,416 C680,450 681,480 682,502" stroke="#dadada" stroke-width="2.200"/>
<path d="M688,420 C687,450 689,480 689,503" stroke="#8c8c8c" stroke-width="1.600"/>
<path d="M694,416 C694,440 692,470 694,503" stroke="#d4d4d4" stroke-width="2"/>
<path d="M706,392 C710,410 700,430 697,448 C695,462 706,476 712,490" stroke="#7e7e7e" stroke-width="2.400"/>
<path d="M710,392 C714,410 704,430 701,448 C699,462 710,476 716,490" stroke="#dedede" stroke-width="2"/>
<path d="M728,400 C727,440 728,470 726,500" stroke="#8e8e8e" stroke-width="1.500"/>
<path d="M734,400 C733,440 734,470 732,494" stroke="#9c9c9c" stroke-width="1.500"/>
<!-- hem band -->
<path d="M694,468 C708,478 724,482 738,478" stroke="#8a8a8a" stroke-width="1.400"/>
<path d="M692,476 C706,488 722,492 736,488" stroke="#909090" stroke-width="1.200"/>
<path d="M672,500 C690,506 710,506 730,498" stroke="#8a8a8a" stroke-width="1.500"/>
<!-- hand -->
<path d="M624,353 C628,350 634,350 640,350 L640,358 C634,361 628,362 625,359 Z" fill="#d2d2d2" stroke="none"/>
<path d="M626,356 L633,354 M627,359 L634,357" stroke="#a0a0a0" stroke-width="0.800"/>
</g>
<path d="M697,518 L697.500,508 C702,505.500 712,505.500 716,507 L715.500,517 Z" fill="#a6a6a6" filter="url(#b1)"/>
<path d="M700,515 L701,510 M704,516 L705,511 M708,516 L709,511" stroke="#7e7e7e" stroke-width="0.700"/>
</g>
<!-- staff -->
<path d="M687.5,334 L682.5,315 C681.5,308.500 676,306 672.800,310" fill="none" stroke="#b4b4b4" stroke-width="1.700"/>
<!-- hand -->
<!-- finial + flourish -->
<path d="M646.5,193.0C647.7,193.9 644.2,194.8 643.0,195.5C641.8,196.2 640.4,196.8 639.0,197.0C637.6,197.2 635.8,197.2 634.5,196.5C633.2,195.8 631.8,194.3 631.3,193.0C630.8,191.7 631.0,189.6 631.5,188.5C632.0,187.4 633.6,186.4 634.5,186.3C635.4,186.2 636.8,187.3 637.0,188.0C637.2,188.7 634.4,189.5 636.0,190.3" fill="none" stroke="#6c6c60" stroke-width="2.6" stroke-linecap="round"/><path d="M646.5,193.0C647.7,193.9 644.2,194.8 643.0,195.5C641.8,196.2 640.4,196.8 639.0,197.0C637.6,197.2 635.8,197.2 634.5,196.5C633.2,195.8 631.8,194.3 631.3,193.0C630.8,191.7 631.0,189.6 631.5,188.5C632.0,187.4 633.6,186.4 634.5,186.3C635.4,186.2 636.8,187.3 637.0,188.0C637.2,188.7 634.4,189.5 636.0,190.3" fill="none" stroke="#c4c4c4" stroke-width="1.1" stroke-linecap="round"/><path d="M649.6,202.0C649.0,201.8 647.6,199.1 647.2,197.5C646.9,195.9 647.0,194.0 647.5,192.5C648.0,191.0 649.1,189.3 650.5,188.3C651.9,187.3 654.1,186.5 656.0,186.3C657.9,186.1 660.0,186.6 662.0,187.3C664.0,188.0 666.3,189.4 668.0,190.5C669.7,191.6 672.0,193.5 672.0,194.0C672.0,194.5 669.6,193.8 668.0,193.3C666.4,192.8 664.3,191.4 662.5,190.8C660.7,190.2 658.6,189.9 657.0,190.0C655.4,190.1 653.9,190.7 652.8,191.5C651.7,192.3 650.9,193.8 650.6,195.0C650.3,196.2 651.2,197.8 651.0,199.0C650.8,200.2 650.2,202.2 649.6,202.0Z" fill="url(#gscroll0)" stroke="#66665a" stroke-width="0.6"/><path d="M675.0,198.0C675.0,197.4 672.5,195.2 671.0,194.5C669.5,193.8 667.5,193.4 666.0,193.5C664.5,193.6 662.8,194.2 662.0,195.0C661.2,195.8 661.0,198.2 661.2,198.5C661.5,198.8 662.5,196.9 663.5,196.5C664.5,196.1 665.8,196.0 667.0,196.3C668.2,196.6 669.7,198.0 671.0,198.3C672.3,198.6 675.0,198.6 675.0,198.0Z" fill="#9c9c9c" stroke="#66665a" stroke-width="0.5"/><g transform="translate(682.5,197) rotate(-74)"><path d="M0,-4 C-2.4,-11.475 -1.8,-21.675 0.6,-25.5 C2.0,-20.400000000000002 2.4,-11.475 0,-4 Z" fill="url(#gfanl)" stroke="#5c5c54" stroke-width="0.55"/></g><g transform="translate(682.5,197) rotate(-62)"><path d="M0,-4 C-2.4,-10.8 -1.8,-20.4 0.6,-24 C2.0,-19.200000000000003 2.4,-10.8 0,-4 Z" fill="url(#gfanl)" stroke="#5c5c54" stroke-width="0.55"/></g><g transform="translate(682.5,197) rotate(-49)"><path d="M0,-4 C-2.35,-9.9 -1.75,-18.7 0.6,-22 C1.95,-17.6 2.35,-9.9 0,-4 Z" fill="url(#gfanl)" stroke="#5c5c54" stroke-width="0.55"/></g><g transform="translate(682.5,197) rotate(-36)"><path d="M0,-4 C-2.25,-9.225 -1.65,-17.425 0.6,-20.5 C1.8499999999999999,-16.400000000000002 2.25,-9.225 0,-4 Z" fill="url(#gfanl)" stroke="#5c5c54" stroke-width="0.55"/></g><g transform="translate(682.5,197) rotate(-23)"><path d="M0,-4 C-2.1,-8.775 -1.5,-16.575 0.6,-19.5 C1.7,-15.600000000000001 2.1,-8.775 0,-4 Z" fill="url(#gfanl)" stroke="#5c5c54" stroke-width="0.55"/></g><path d="M718.5,193.0C717.3,193.9 720.8,194.8 722.0,195.5C723.2,196.2 724.6,196.8 726.0,197.0C727.4,197.2 729.2,197.2 730.5,196.5C731.8,195.8 733.2,194.3 733.7,193.0C734.2,191.7 734.0,189.6 733.5,188.5C733.0,187.4 731.4,186.4 730.5,186.3C729.6,186.2 728.2,187.3 728.0,188.0C727.8,188.7 730.6,189.5 729.0,190.3" fill="none" stroke="#6c6c60" stroke-width="2.6" stroke-linecap="round"/><path d="M718.5,193.0C717.3,193.9 720.8,194.8 722.0,195.5C723.2,196.2 724.6,196.8 726.0,197.0C727.4,197.2 729.2,197.2 730.5,196.5C731.8,195.8 733.2,194.3 733.7,193.0C734.2,191.7 734.0,189.6 733.5,188.5C733.0,187.4 731.4,186.4 730.5,186.3C729.6,186.2 728.2,187.3 728.0,188.0C727.8,188.7 730.6,189.5 729.0,190.3" fill="none" stroke="#c4c4c4" stroke-width="1.1" stroke-linecap="round"/><path d="M715.4,202.0C716.0,201.8 717.4,199.1 717.8,197.5C718.1,195.9 718.0,194.0 717.5,192.5C717.0,191.0 715.9,189.3 714.5,188.3C713.1,187.3 710.9,186.5 709.0,186.3C707.1,186.1 705.0,186.6 703.0,187.3C701.0,188.0 698.7,189.4 697.0,190.5C695.3,191.6 693.0,193.5 693.0,194.0C693.0,194.5 695.4,193.8 697.0,193.3C698.6,192.8 700.7,191.4 702.5,190.8C704.3,190.2 706.4,189.9 708.0,190.0C709.6,190.1 711.1,190.7 712.2,191.5C713.3,192.3 714.1,193.8 714.4,195.0C714.7,196.2 713.8,197.8 714.0,199.0C714.2,200.2 714.8,202.2 715.4,202.0Z" fill="url(#gscroll1)" stroke="#66665a" stroke-width="0.6"/><path d="M690.0,198.0C690.0,197.4 692.5,195.2 694.0,194.5C695.5,193.8 697.5,193.4 699.0,193.5C700.5,193.6 702.2,194.2 703.0,195.0C703.8,195.8 704.0,198.2 703.8,198.5C703.5,198.8 702.5,196.9 701.5,196.5C700.5,196.1 699.2,196.0 698.0,196.3C696.8,196.6 695.3,198.0 694.0,198.3C692.7,198.6 690.0,198.6 690.0,198.0Z" fill="#9c9c9c" stroke="#66665a" stroke-width="0.5"/><g transform="translate(682.5,197) rotate(74)"><path d="M0,-4 C-2.4,-11.475 -1.8,-21.675 -0.6,-25.5 C2.0,-20.400000000000002 2.4,-11.475 0,-4 Z" fill="url(#gfanl)" stroke="#5c5c54" stroke-width="0.55"/></g><g transform="translate(682.5,197) rotate(62)"><path d="M0,-4 C-2.4,-10.8 -1.8,-20.4 -0.6,-24 C2.0,-19.200000000000003 2.4,-10.8 0,-4 Z" fill="url(#gfanl)" stroke="#5c5c54" stroke-width="0.55"/></g><g transform="translate(682.5,197) rotate(49)"><path d="M0,-4 C-2.35,-9.9 -1.75,-18.7 -0.6,-22 C1.95,-17.6 2.35,-9.9 0,-4 Z" fill="url(#gfanl)" stroke="#5c5c54" stroke-width="0.55"/></g><g transform="translate(682.5,197) rotate(36)"><path d="M0,-4 C-2.25,-9.225 -1.65,-17.425 -0.6,-20.5 C1.8499999999999999,-16.400000000000002 2.25,-9.225 0,-4 Z" fill="url(#gfanl)" stroke="#5c5c54" stroke-width="0.55"/></g><g transform="translate(682.5,197) rotate(23)"><path d="M0,-4 C-2.1,-8.775 -1.5,-16.575 -0.6,-19.5 C1.7,-15.600000000000001 2.1,-8.775 0,-4 Z" fill="url(#gfanl)" stroke="#5c5c54" stroke-width="0.55"/></g><path d="M682.5,172.8 C679.3,178 679.1,186 680.5,191 L684.5,191 C685.9,186 685.7,178 682.5,172.8 Z" fill="url(#gfin)" stroke="#5c5c54" stroke-width="0.5"/><path d="M682.5,187.5 C679.5,190.5 675.7,193 675.9,196.5 C676.1,199.5 678.0,201.6 679.0,201.8 L686.0,201.8 C687.0,201.6 688.9,199.5 689.1,196.5 C689.3,193 685.5,190.5 682.5,187.5 Z" fill="url(#gfin)"/>
<circle cx="602.6" cy="214.5" r="12" fill="url(#gros)" filter="url(#b1)"/><circle cx="613.1" cy="214.5" r="2.6" fill="#3c3c34" opacity="0.85"/><circle cx="611.7" cy="219.8" r="2.6" fill="#3c3c34" opacity="0.85"/><circle cx="607.9" cy="223.6" r="2.6" fill="#3c3c34" opacity="0.85"/><circle cx="602.6" cy="225.0" r="2.6" fill="#3c3c34" opacity="0.85"/><circle cx="597.4" cy="223.6" r="2.6" fill="#3c3c34" opacity="0.85"/><circle cx="593.5" cy="219.8" r="2.6" fill="#3c3c34" opacity="0.85"/><circle cx="592.1" cy="214.5" r="2.6" fill="#3c3c34" opacity="0.85"/><circle cx="593.5" cy="209.2" r="2.6" fill="#3c3c34" opacity="0.85"/><circle cx="597.4" cy="205.4" r="2.6" fill="#3c3c34" opacity="0.85"/><circle cx="602.6" cy="204.0" r="2.6" fill="#3c3c34" opacity="0.85"/><circle cx="607.9" cy="205.4" r="2.6" fill="#3c3c34" opacity="0.85"/><circle cx="611.7" cy="209.2" r="2.6" fill="#3c3c34" opacity="0.85"/><circle cx="602.6" cy="214.5" r="6.3" fill="url(#grosc)"/>
<circle cx="762.5" cy="214.5" r="12" fill="url(#gros)" filter="url(#b1)"/><circle cx="773.0" cy="214.5" r="2.6" fill="#3c3c34" opacity="0.85"/><circle cx="771.6" cy="219.8" r="2.6" fill="#3c3c34" opacity="0.85"/><circle cx="767.8" cy="223.6" r="2.6" fill="#3c3c34" opacity="0.85"/><circle cx="762.5" cy="225.0" r="2.6" fill="#3c3c34" opacity="0.85"/><circle cx="757.2" cy="223.6" r="2.6" fill="#3c3c34" opacity="0.85"/><circle cx="753.4" cy="219.8" r="2.6" fill="#3c3c34" opacity="0.85"/><circle cx="752.0" cy="214.5" r="2.6" fill="#3c3c34" opacity="0.85"/><circle cx="753.4" cy="209.2" r="2.6" fill="#3c3c34" opacity="0.85"/><circle cx="757.2" cy="205.4" r="2.6" fill="#3c3c34" opacity="0.85"/><circle cx="762.5" cy="204.0" r="2.6" fill="#3c3c34" opacity="0.85"/><circle cx="767.8" cy="205.4" r="2.6" fill="#3c3c34" opacity="0.85"/><circle cx="771.6" cy="209.2" r="2.6" fill="#3c3c34" opacity="0.85"/><circle cx="762.5" cy="214.5" r="6.3" fill="url(#grosc)"/>
<g fill="none"><path d="M592.3,304 V383" stroke="#544e22" stroke-width="1.4"/><path d="M594.1999999999999,304 V383" stroke="#84825c" stroke-width="1.3"/><path d="M592.3,412 V492" stroke="#544e22" stroke-width="1.4"/><path d="M594.1999999999999,412 V492" stroke="#84825c" stroke-width="1.3"/><path d="M593.1999999999999,304 c-3.5,-1 -4.5,-4.5 -1.5,-6.5 c2.5,-1.5 2.5,-5 -0.5,-6 c-2,-0.6 -3,1 -2,2.2" stroke="#56522a" stroke-width="2" stroke-linecap="round"/><path d="M593.1999999999999,383 c-3.5,1 -4.5,4.5 -1.5,6.5 c2.5,1.5 2.5,5 -0.5,6 c-2,0.6 -3,-1 -2,-2.2" stroke="#56522a" stroke-width="2" stroke-linecap="round"/><path d="M593.1999999999999,412 c-3.5,-1 -4.5,-4.5 -1.5,-6.5 c2.5,-1.5 2.5,-5 -0.5,-6 c-2,-0.6 -3,1 -2,2.2" stroke="#56522a" stroke-width="2" stroke-linecap="round"/><path d="M593.1999999999999,492 c-3.5,1 -4.5,4.5 -1.5,6.5 c2.5,1.5 2.5,5 -0.5,6 c-2,0.6 -3,-1 -2,-2.2" stroke="#56522a" stroke-width="2" stroke-linecap="round"/></g>
<g fill="none"><path d="M770.6,304 V383" stroke="#544e22" stroke-width="1.4"/><path d="M772.5,304 V383" stroke="#84825c" stroke-width="1.3"/><path d="M770.6,412 V492" stroke="#544e22" stroke-width="1.4"/><path d="M772.5,412 V492" stroke="#84825c" stroke-width="1.3"/><path d="M771.5,304 c3.5,-1 4.5,-4.5 1.5,-6.5 c-2.5,-1.5 -2.5,-5 0.5,-6 c2,-0.6 3,1 2,2.2" stroke="#56522a" stroke-width="2" stroke-linecap="round"/><path d="M771.5,383 c3.5,1 4.5,4.5 1.5,6.5 c-2.5,1.5 -2.5,5 0.5,6 c2,0.6 3,-1 2,-2.2" stroke="#56522a" stroke-width="2" stroke-linecap="round"/><path d="M771.5,412 c3.5,-1 4.5,-4.5 1.5,-6.5 c-2.5,-1.5 -2.5,-5 0.5,-6 c2,-0.6 3,1 2,2.2" stroke="#56522a" stroke-width="2" stroke-linecap="round"/><path d="M771.5,492 c3.5,1 4.5,4.5 1.5,6.5 c-2.5,1.5 -2.5,5 0.5,6 c2,0.6 3,-1 2,-2.2" stroke="#56522a" stroke-width="2" stroke-linecap="round"/></g>
<!-- cursor -->
<g stroke="#f6f6b4" stroke-width="1.2" fill="none"><path d="M623.8,326.5 H626.2 M628.6,326.5 H631 M627.4,322.9 V325.3 M627.4,327.7 V330.1"/><path d="M625.2,324.3 V325.1 M625.2,327.9 V328.7 M629.6,324.3 V325.1 M629.6,327.9 V328.7" stroke="#e8e890"/></g>
</svg><svg class="a" style="left:0;top:0" width="1366" height="767" viewBox="0 0 1366 767">
<defs>
<radialGradient id="glens" cx="0.4" cy="0.35"><stop offset="0" stop-color="#f4fbff"/><stop offset="1" stop-color="#c4dcee"/></radialGradient>
<g id="mag"><circle cx="4.6" cy="4.8" r="2.6" fill="#c9a466"/><circle cx="5" cy="5.2" r="1.6" fill="#a8824a"/><circle cx="0" cy="0" r="5.6" fill="url(#glens)" stroke="#6f8aa6" stroke-width="1.5"/></g>
</defs>
<!-- 3D -->
<text x="284.5" y="62.4" font-family="Liberation Sans" font-weight="bold" font-size="14.5" textLength="16.5" lengthAdjust="spacingAndGlyphs" fill="#0a0a0a">3D</text>
<!-- zoom icons -->
<g transform="translate(314.3,57)"><use href="#mag"/><path d="M-3.5,0 H3.5 M0,-3.5 V3.5" stroke="#1c3c66" stroke-width="1.5" fill="none"/></g>
<g transform="translate(337.5,57)"><use href="#mag"/><path d="M-3.6,0 H3.6" stroke="#1c3c66" stroke-width="1.7" fill="none"/></g>
<g transform="translate(360.7,57)"><use href="#mag"/><path d="M-2.6,-0.5 A2.8,2.8 0 1 1 0.2,3" stroke="#8a9a18" stroke-width="1.6" fill="none"/><path d="M-4.4,-1.8 L-0.8,-2 L-2.4,1.2 Z" fill="#8a9a18"/></g>
<rect x="377" y="50" width="1" height="18" fill="#a6a6a6"/>
<g transform="translate(391.6,57)"><use href="#mag"/><text x="0" y="2.2" text-anchor="middle" font-family="Liberation Sans" font-weight="bold" font-size="6.5" fill="#2a5a86">1:1</text></g>
<g transform="translate(414.8,57)"><use href="#mag"/><rect x="-3.2" y="-2.6" width="6.4" height="5.2" fill="none" stroke="#234a78" stroke-width="1.4"/></g>
<g transform="translate(438.5,57)" fill="#9c9c9c"><circle cx="0" cy="0" r="6.3"/><circle cx="-4" cy="-2" r="3.4"/><circle cx="2.5" cy="-4" r="3.2"/><path d="M2,3 L8,9 L5,10 L0,5 Z"/><circle cx="6" cy="7.5" r="2.4"/></g>
<rect x="454" y="50" width="1" height="18" fill="#a6a6a6"/>
<!-- two pressed buttons -->
<rect x="459.5" y="48.5" width="22" height="20.5" fill="#f8f8f8" stroke="#b4b4b4"/>
<path d="M459.5,69 V48.5 H481.5" stroke="#8c8c8c" fill="none"/>
<rect x="482.5" y="48.5" width="21.5" height="20.5" fill="#f6f6f6" stroke="#c8c8c8"/>
<path d="M482.5,69 V48.5 H504" stroke="#9c9c9c" fill="none"/>
<g stroke="#111" stroke-width="1" stroke-dasharray="1.5 1" fill="none"><path d="M466,51.5 H472 M466,54.5 H471 M466,63.5 H471 M466,66.5 H472 M467.5,51 V67"/></g>
<path d="M468,59.3 L473.5,54 V57.2 H479 V61.4 H473.5 V64.6 Z" fill="#555" stroke="#000" stroke-width="1"/>
<g stroke="#111" stroke-width="1" stroke-dasharray="1.5 1" fill="none"><path d="M493,51.5 H500 M495,54.5 H500 M495,63.5 H500 M493,66.5 H500 M499.5,51 V67"/></g>
<path d="M498,59.3 L492.5,54 V57.2 H487 V61.4 H492.5 V64.6 Z" fill="#555" stroke="#000" stroke-width="1"/>
<!-- blue arrow lens -->
<g transform="translate(516,59)"><path d="M-8,-0.5 L-1,-6 V-3 C3,-4 6,-2 7,3 C4,1 1,1.5 -1,2.5 V5 Z" fill="#8896d4" stroke="#6a78b8" stroke-width="0.6"/><circle cx="1.5" cy="-1" r="3.6" fill="#c8d4f0" opacity="0.85" stroke="#8fa0cc" stroke-width="0.8"/><path d="M4,2 L7.5,6" stroke="#c8a468" stroke-width="2"/></g>
<rect x="531" y="50" width="1" height="18" fill="#a6a6a6"/>
<!-- slider -->
<rect x="544" y="58" width="74" height="2" fill="#8e8e8e"/><rect x="544" y="60" width="74" height="1" fill="#dcdcdc"/>
<path d="M618.5,50.5 H627.5 V66 L623.5,69.5 H618.5 Z" fill="#f2f2f2" stroke="#e0e0e0" stroke-width="1"/>
<path d="M627.5,50 V66 L623.5,69.8" stroke="#5e5e5e" stroke-width="1.3" fill="none"/>
<!-- ruler corner -->
<g stroke="#a8a8a8" stroke-width="1" stroke-dasharray="1 1" shape-rendering="crispEdges"><path d="M281,84.5 H293 M285.5,80 V90 M289.5,80 V90"/></g>
<!-- millimetres -->
<rect x="1029" y="76" width="41" height="12" fill="#f0f0f0"/>
<text x="1029" y="86.3" font-family="Liberation Sans" font-size="10.5" textLength="40" lengthAdjust="spacingAndGlyphs" fill="#000">millimetres</text>
<rect x="1022" y="76" width="8.5" height="11" fill="#f0f0f0"/>
<path d="M1028.5,76 V83 L1030.5,85" stroke="#000" stroke-width="1" fill="none"/>
<!-- ruler dropdown button -->
<rect x="1070.5" y="74.5" width="17" height="19.5" fill="#f2f2f2" stroke="#9a9a9a"/>
<path d="M1071.5,93 V75.5 H1086.5" stroke="#fff" fill="none"/>
<path d="M1087.5,74.5 V94.5 H1070.5" stroke="#6e6e6e" fill="none"/>
<path d="M1075,81.5 H1078 M1080,81.5 H1083" stroke="#000" stroke-width="1.2"/>
<path d="M1074.5,84 H1083.5 L1079,88.5 Z" fill="#000"/>
<!-- scroll arrows -->
<g fill="none" stroke="#585858" stroke-width="2.2">
<path d="M1075,107 L1079.5,102.5 L1084,107"/>
<path d="M1075,674 L1079.5,678.5 L1084,674"/>
<path d="M309,689 L304.500,693.5 L309,698"/>
<path d="M1059.5,689 L1064,693.5 L1059.5,698"/>
<path d="M1075,718.500 L1079.5,714 L1084,718.500"/>
<path d="M1075,736 L1079.5,740.5 L1084,736"/>
<path d="M256,69 L260.5,63.5 L265,69" stroke-width="2.6"/>
<path d="M256,696 L260.5,701.5 L265,696" stroke-width="2.6"/>
</g>
<!-- bottom-left corner button -->
<rect x="278.5" y="685.5" width="19" height="16" fill="#f2f2f2" stroke="#a8a8a8"/>
<path d="M297.5,685 V701.500 H278" stroke="#7a7a7a" fill="none"/>
<path d="M285.500,689 V691 M285.500,693 V695 M285.500,697 V698.500" stroke="#000" stroke-width="1.3"/>
<path d="M288.500,689 L293,693.800 L288.500,698.500 Z" fill="#000"/>
<!-- palette link icon -->
<g fill="none" stroke="#111" stroke-width="1.2"><rect x="311.500" y="712.500" width="7" height="4.500" rx="2"/><rect x="314.500" y="715.500" width="7" height="4.500" rx="2"/></g>
</svg>
<!-- left scrollbar thumb -->
<div class="a" style="left:253px;top:78px;width:15px;height:355px;background:#cdcdcd"></div>
</div>

<!-- RIGHT PANEL -->
<div id="right">
<div class="bh" style="top:45px"><div class="t">Vectors</div><div class="cbtn"></div></div>
<div class="dd" style="top:62px"><div class="t">Default Sheet</div><div class="ar"></div></div>
<div class="lrow" style="top:112px;height:26px"></div>
<div class="t" style="left:1128px;top:119px">Default Layer</div>
<div class="bh" style="top:172px"><div class="t" style="letter-spacing:-0.75px">Bitmaps</div><div class="cbtn"></div></div>
<div class="lrow" style="top:213px;height:24px"></div>
<div class="t" style="left:1128px;top:219px">Bitmap Layer 1</div>
<div class="bh" style="top:253px"><div class="t" style="letter-spacing:-0.63px">Reliefs</div><div class="cbtn"></div></div>
<div class="dd" style="top:270px"><div class="t">Front Relief</div><div class="ar"></div></div>
<div class="lrow" style="top:320px;height:26px"></div>
<div class="t" style="left:1149px;top:327px">Relief Layer 1</div>
<svg class="a" style="left:1094px;top:0" width="272" height="767" viewBox="1094 0 272 767">
<defs>
<linearGradient id="rgdoc" x1="0" y1="0" x2="1" y2="1"><stop offset="0" stop-color="#cfdcf0"/><stop offset="0.5" stop-color="#a8bcdc"/><stop offset="1" stop-color="#7a90b8"/></linearGradient>
<linearGradient id="rgdoc2" x1="0" y1="0" x2="1" y2="0"><stop offset="0" stop-color="#dfe8f6"/><stop offset="1" stop-color="#9cb0d4"/></linearGradient>
<radialGradient id="rgbulb" cx="0.4" cy="0.35"><stop offset="0" stop-color="#fff8b0"/><stop offset="0.6" stop-color="#fbdc28"/><stop offset="1" stop-color="#e8a818"/></radialGradient>
<linearGradient id="rggray" x1="0" y1="0" x2="1" y2="1"><stop offset="0" stop-color="#8a8a8a"/><stop offset="1" stop-color="#e4e4e4"/></linearGradient>
</defs>
<g transform="translate(1103.5,90.5)"><path d="M6,15.500 L13.500,15.500 L11,10 L8,10 Z" fill="#a8a8a8" opacity="0.600"/><path d="M0.500,1.500 L6,0 L9.800,4 V14.500 H0.500 Z" fill="url(#rgdoc)"/><path d="M6,0 L9.800,4 L6.500,4.300 Z" fill="#eef3fb"/></g><g transform="translate(1140,92.3)"><path d="M0.500,2 C0.500,0.800 1.200,0.300 2.200,0.300 H6.500 L8,1.800 H11.500 C12.300,1.800 12.800,2.300 12.800,3.200 V6.500 L3,11.500 H1.500 C0.800,11.500 0.500,11 0.500,10.300 Z" fill="#f6e81c"/><path d="M1.500,11.800 L4.500,6.800 C4.800,6.300 5.200,6.200 6,6.200 H15 L11.500,11.800 Z" fill="#d9bc0c"/></g><g transform="translate(1176.7,92.3)"><path d="M11,13 L17,9 L15,7" fill="#9a9a9a" opacity="0.5"/><path d="M0,0 H15 V12 H1.500 L0,10.500 Z" fill="#1e58b8"/><rect x="3" y="0" width="9" height="5.500" fill="#e2e2e2"/><rect x="3.500" y="7.500" width="8" height="4.500" fill="#cdd6e6"/><rect x="5" y="8.500" width="2.400" height="3.500" fill="#1e58b8"/></g><g transform="translate(1212.4,90.6)"><path d="M8,16 L17,13 L14,9" fill="#9a9a9a" opacity="0.4"/><path d="M0,1 L6,0 L8,3 L10,2.500 L13,9 L16,15 L5,15.500 L2,10 Z" fill="#c4a074"/><path d="M0,1 L2,10 L5,15.500 L7,15 L5,8 L6,0 Z" fill="#a68660"/><path d="M0.500,2 L1.500,3 M0.800,4.500 L1.800,5.500 M1.200,7 L2.200,8" stroke="#7a6040" stroke-width="0.700"/></g><g transform="translate(1251.7,90.6)"><path d="M0,2 L8,0 L12,4 V16 H0 Z" fill="url(#rgdoc)"/><g transform="translate(6.5,7.5) scale(0.85)"><circle cx="0" cy="0" r="4.800" fill="url(#rgbulb)"/><path d="M-2.600,3.500 H2.600 L2,7 H-2 Z" fill="#f0c020"/><rect x="-2" y="6.500" width="4" height="2.800" fill="#3a2a18"/><circle cx="-1.400" cy="-1.600" r="1.600" fill="#fffce0" opacity="0.900"/></g></g><g transform="translate(1289,92.3)"><path d="M0.500,2.500 L11.500,2.500 L10,12 H2 Z" fill="#3f86e8"/><path d="M6,2.500 H11.500 L10,12 H6.500 Z" fill="#2a68c8"/><ellipse cx="6" cy="2.300" rx="6" ry="2.200" fill="#8cbcf4" stroke="#2a68c8" stroke-width="0.600"/><ellipse cx="6" cy="2.300" rx="3.500" ry="1" fill="#dcecff"/></g><g transform="translate(1322.8,89.6)"><rect x="0" y="0" width="18.500" height="17.500" fill="#fbe6c0" stroke="#e8a850" stroke-width="0.800"/><g transform="translate(6,6.5) scale(0.95)"><circle cx="0" cy="0" r="4.800" fill="url(#rgbulb)"/><path d="M-2.600,3.500 H2.600 L2,7 H-2 Z" fill="#f0c020"/><rect x="-2" y="6.500" width="4" height="2.800" fill="#3a2a18"/><circle cx="-1.400" cy="-1.600" r="1.600" fill="#fffce0" opacity="0.900"/></g><g transform="translate(13,5.5) scale(0.95)"><circle cx="0" cy="0" r="4.800" fill="url(#rgbulb)"/><path d="M-2.600,3.500 H2.600 L2,7 H-2 Z" fill="#f0c020"/><rect x="-2" y="6.500" width="4" height="2.800" fill="#3a2a18"/><circle cx="-1.400" cy="-1.600" r="1.600" fill="#fffce0" opacity="0.900"/></g></g><rect x="1105.5" y="116" width="17.5" height="17.5" fill="#e9e9e9"/><path d="M1106.0,133.5 V116.5 H1123.0" stroke="#fff" fill="none"/><path d="M1122.5,116 V133.0 H1105.5" stroke="#9a9a9a" fill="none"/><circle cx="1114.5" cy="125" r="6.800" fill="#000"/><rect x="1287.5" y="116" width="17" height="17.5" fill="#dcdcdc"/><path d="M1288.0,133.5 V116.5 H1304.5" stroke="#fff" fill="none"/><path d="M1304.0,116 V133.0 H1287.5" stroke="#9a9a9a" fill="none"/><path d="M1292,125 V122 C1292,117.500 1300,117.500 1300,122 V125" fill="none" stroke="#8a8a8a" stroke-width="2"/><rect x="1290.500" y="124.500" width="11" height="8" fill="#a4a4a4"/><path d="M1296,131.500 V127.500 M1294,129.500 L1296,127 L1298,129.500" stroke="#111" stroke-width="1.400" fill="none"/><rect x="1305.500" y="116" width="17.500" height="17.500" fill="#ececec"/><path d="M1308.500,116.500 V133.500 M1305.500,130.500 H1322" stroke="#000" stroke-width="1" stroke-dasharray="2 1.200" fill="none"/><path d="M1320.500,118 L1315,123.500 L1317,125.500 L1310.500,128.500 L1313,122 L1315,123.800 Z" fill="#000" stroke="#000" stroke-width="1.200"/><rect x="1324" y="116" width="17" height="17.500" fill="#d4d4d4"/><g transform="translate(1332.5,123.5) scale(1.05)"><circle cx="0" cy="0" r="4.800" fill="url(#rgbulb)"/><path d="M-2.600,3.500 H2.600 L2,7 H-2 Z" fill="#f0c020"/><rect x="-2" y="6.500" width="4" height="2.800" fill="#3a2a18"/><circle cx="-1.400" cy="-1.600" r="1.600" fill="#fffce0" opacity="0.900"/></g><g transform="translate(1311.8,141)"><rect x="0" y="0" width="12.400" height="12" rx="1.800" fill="#164fa8"/><rect x="0.500" y="0.500" width="11.400" height="11" rx="1.500" fill="none" stroke="#3a78d8" stroke-width="0.600"/><path d="M6.200,10 V3 M3,6 L6.200,2.800 L9.400,6" fill="none" stroke="#fff" stroke-width="1.900"/></g><g transform="translate(1329.8,141)"><rect x="0" y="0" width="12.400" height="12" rx="1.800" fill="#164fa8"/><rect x="0.500" y="0.500" width="11.400" height="11" rx="1.500" fill="none" stroke="#3a78d8" stroke-width="0.600"/><path d="M6.200,2.500 V9.500 M3,6.500 L6.200,9.700 L9.400,6.500" fill="none" stroke="#fff" stroke-width="1.900"/></g><g transform="translate(1103.5,192)"><path d="M6,15.500 L13.500,15.500 L11,10 L8,10 Z" fill="#a8a8a8" opacity="0.600"/><path d="M0.500,1.500 L6,0 L9.800,4 V14.500 H0.500 Z" fill="url(#rgdoc)"/><path d="M6,0 L9.800,4 L6.500,4.300 Z" fill="#eef3fb"/></g><g transform="translate(1135,194)"><path d="M0.500,2 C0.500,0.800 1.200,0.300 2.200,0.300 H6.500 L8,1.800 H11.500 C12.300,1.800 12.800,2.300 12.800,3.200 V6.500 L3,11.500 H1.500 C0.800,11.500 0.500,11 0.500,10.300 Z" fill="#f6e81c"/><path d="M1.500,11.800 L4.500,6.800 C4.800,6.300 5.200,6.200 6,6.200 H15 L11.500,11.800 Z" fill="#d9bc0c"/></g><g transform="translate(1165.5,194)"><path d="M11,13 L17,9 L15,7" fill="#9a9a9a" opacity="0.5"/><path d="M0,0 H15 V12 H1.500 L0,10.500 Z" fill="#1e58b8"/><rect x="3" y="0" width="9" height="5.500" fill="#e2e2e2"/><rect x="3.500" y="7.500" width="8" height="4.500" fill="#cdd6e6"/><rect x="5" y="8.500" width="2.400" height="3.500" fill="#1e58b8"/></g><g transform="translate(1197.8,192)"><path d="M8,16 L17,13 L14,9" fill="#9a9a9a" opacity="0.4"/><path d="M0,1 L6,0 L8,3 L10,2.500 L13,9 L16,15 L5,15.500 L2,10 Z" fill="#c4a074"/><path d="M0,1 L2,10 L5,15.500 L7,15 L5,8 L6,0 Z" fill="#a68660"/><path d="M0.500,2 L1.500,3 M0.800,4.500 L1.800,5.500 M1.200,7 L2.200,8" stroke="#7a6040" stroke-width="0.700"/></g><g transform="translate(1229,193)"><path d="M10,15 L17,12 L14,8" fill="#9a9a9a" opacity="0.500"/><rect x="0" y="0" width="13" height="13" fill="url(#rggray)"/></g><g transform="translate(1260.5,192.5)"><g transform="translate(0,0) scale(0.7)"><rect x="0" y="0" width="16" height="16" fill="#3c3218"/><rect x="0" y="0" width="16" height="6" fill="#8a8a50"/><path d="M3,16 C3,11 5,9 8,9 C11,9 13,11 13,16 Z" fill="#20180a"/><path d="M4.500,5 C4.500,0.500 11.500,0.500 11.500,5 L12.500,10 H3.500 Z" fill="#2c1e0c"/><ellipse cx="8" cy="5" rx="2.300" ry="3" fill="#dcb474"/><path d="M6,10.500 H10 L11,13.500 H5 Z" fill="#c89858"/></g><path d="M4,9 L13,7 L17,12 L17,15 H6 Z" fill="#a8a4d8" stroke="#7a78b8" stroke-width="0.500"/></g><g transform="translate(1294,194)"><path d="M0.500,2.500 L11.500,2.500 L10,12 H2 Z" fill="#3f86e8"/><path d="M6,2.500 H11.500 L10,12 H6.500 Z" fill="#2a68c8"/><ellipse cx="6" cy="2.300" rx="6" ry="2.200" fill="#8cbcf4" stroke="#2a68c8" stroke-width="0.600"/><ellipse cx="6" cy="2.300" rx="3.500" ry="1" fill="#dcecff"/></g><g transform="translate(1322.8,191)"><rect x="0" y="0" width="18.500" height="17.500" fill="#fbe6c0" stroke="#e8a850" stroke-width="0.800"/><g transform="translate(6,6.5) scale(0.95)"><circle cx="0" cy="0" r="4.800" fill="url(#rgbulb)"/><path d="M-2.600,3.500 H2.600 L2,7 H-2 Z" fill="#f0c020"/><rect x="-2" y="6.500" width="4" height="2.800" fill="#3a2a18"/><circle cx="-1.400" cy="-1.600" r="1.600" fill="#fffce0" opacity="0.900"/></g><g transform="translate(13,5.5) scale(0.95)"><circle cx="0" cy="0" r="4.800" fill="url(#rgbulb)"/><path d="M-2.600,3.500 H2.600 L2,7 H-2 Z" fill="#f0c020"/><rect x="-2" y="6.500" width="4" height="2.800" fill="#3a2a18"/><circle cx="-1.400" cy="-1.600" r="1.600" fill="#fffce0" opacity="0.900"/></g></g><g transform="translate(1106,217) scale(1.0)"><rect x="0" y="0" width="16" height="16" fill="#3c3218"/><rect x="0" y="0" width="16" height="6" fill="#8a8a50"/><path d="M3,16 C3,11 5,9 8,9 C11,9 13,11 13,16 Z" fill="#20180a"/><path d="M4.500,5 C4.500,0.500 11.500,0.500 11.500,5 L12.500,10 H3.500 Z" fill="#2c1e0c"/><ellipse cx="8" cy="5" rx="2.300" ry="3" fill="#dcb474"/><path d="M6,10.500 H10 L11,13.500 H5 Z" fill="#c89858"/></g><g transform="translate(1103.5,299.5)"><path d="M6,15.500 L13.500,15.500 L11,10 L8,10 Z" fill="#a8a8a8" opacity="0.600"/><path d="M0.500,1.500 L6,0 L9.800,4 V14.500 H0.500 Z" fill="url(#rgdoc)"/><path d="M6,0 L9.800,4 L6.500,4.300 Z" fill="#eef3fb"/></g><g transform="translate(1129.5,301.5)"><path d="M0.500,2 C0.500,0.800 1.200,0.300 2.200,0.300 H6.500 L8,1.800 H11.500 C12.300,1.800 12.800,2.300 12.800,3.200 V6.500 L3,11.500 H1.500 C0.800,11.500 0.500,11 0.500,10.300 Z" fill="#f6e81c"/><path d="M1.500,11.800 L4.500,6.800 C4.800,6.300 5.200,6.200 6,6.200 H15 L11.500,11.800 Z" fill="#d9bc0c"/></g><g transform="translate(1157.5,301.5)"><path d="M11,13 L17,9 L15,7" fill="#9a9a9a" opacity="0.5"/><path d="M0,0 H15 V12 H1.500 L0,10.500 Z" fill="#1e58b8"/><rect x="3" y="0" width="9" height="5.500" fill="#e2e2e2"/><rect x="3.500" y="7.500" width="8" height="4.500" fill="#cdd6e6"/><rect x="5" y="8.500" width="2.400" height="3.500" fill="#1e58b8"/></g><g transform="translate(1185.5,299.5)"><path d="M8,16 L17,13 L14,9" fill="#9a9a9a" opacity="0.4"/><path d="M0,1 L6,0 L8,3 L10,2.500 L13,9 L16,15 L5,15.500 L2,10 Z" fill="#c4a074"/><path d="M0,1 L2,10 L5,15.500 L7,15 L5,8 L6,0 Z" fill="#a68660"/><path d="M0.500,2 L1.500,3 M0.800,4.500 L1.800,5.500 M1.200,7 L2.200,8" stroke="#7a6040" stroke-width="0.700"/></g><g transform="translate(1213,300.5)"><path d="M8,0 L16,4 L8,8 L0,4 Z" fill="#a8b0ec" stroke="#6a70c0" stroke-width="0.600"/><path d="M0,7.500 L8,11.500 L16,7.500 L13,6 L8,8.500 L3,6 Z" fill="#c81818"/><path d="M0,7.500 L8,11.500 L16,7.500 L16,10 L8,14.500 L0,10 Z" fill="#a01010"/><path d="M5,8.500 L8,10 L11,8.500 L8,7.500 Z" fill="#f0d040"/></g><g transform="translate(1243,299.5)"><path d="M0,2 L8,0 L12,4 V16 H0 Z" fill="url(#rgdoc)"/><g transform="translate(6.5,7.5) scale(0.85)"><circle cx="0" cy="0" r="4.800" fill="url(#rgbulb)"/><path d="M-2.600,3.500 H2.600 L2,7 H-2 Z" fill="#f0c020"/><rect x="-2" y="6.500" width="4" height="2.800" fill="#3a2a18"/><circle cx="-1.400" cy="-1.600" r="1.600" fill="#fffce0" opacity="0.900"/></g></g><g transform="translate(1270,300.5)"><rect x="0" y="0" width="14.500" height="14" fill="#050505"/><g fill="#c0c0c0"><circle cx="4" cy="2.800" r="1.500"/><circle cx="10.500" cy="2.800" r="1.500"/><circle cx="7.250" cy="4.300" r="2.800"/><ellipse cx="7.250" cy="9.500" rx="4.200" ry="3.800"/><circle cx="3" cy="12.500" r="1.600"/><circle cx="11.500" cy="12.500" r="1.600"/><circle cx="2.500" cy="7.500" r="1.500"/><circle cx="12" cy="7.500" r="1.500"/></g><ellipse cx="7.250" cy="10" rx="2.200" ry="2" fill="#808080"/></g><g transform="translate(1298.5,301.5)"><path d="M0.500,2.500 L11.500,2.500 L10,12 H2 Z" fill="#3f86e8"/><path d="M6,2.500 H11.500 L10,12 H6.500 Z" fill="#2a68c8"/><ellipse cx="6" cy="2.300" rx="6" ry="2.200" fill="#8cbcf4" stroke="#2a68c8" stroke-width="0.600"/><ellipse cx="6" cy="2.300" rx="3.500" ry="1" fill="#dcecff"/></g><g transform="translate(1322.8,298.5)"><rect x="0" y="0" width="18.500" height="17.500" fill="#fbe6c0" stroke="#e8a850" stroke-width="0.800"/><g transform="translate(6,6.5) scale(0.95)"><circle cx="0" cy="0" r="4.800" fill="url(#rgbulb)"/><path d="M-2.600,3.500 H2.600 L2,7 H-2 Z" fill="#f0c020"/><rect x="-2" y="6.500" width="4" height="2.800" fill="#3a2a18"/><circle cx="-1.400" cy="-1.600" r="1.600" fill="#fffce0" opacity="0.900"/></g><g transform="translate(13,5.5) scale(0.95)"><circle cx="0" cy="0" r="4.800" fill="url(#rgbulb)"/><path d="M-2.600,3.500 H2.600 L2,7 H-2 Z" fill="#f0c020"/><rect x="-2" y="6.500" width="4" height="2.800" fill="#3a2a18"/><circle cx="-1.400" cy="-1.600" r="1.600" fill="#fffce0" opacity="0.900"/></g></g><path d="M1113,337 C1114,329 1121,324.500 1127,327 C1130,328.500 1131,332 1131,336 L1126,336.500 C1126,332 1122,330.500 1118,334 Z" fill="#c8a848" stroke="#8a7430" stroke-width="0.600"/><path d="M1113,337 C1116,331 1122,330 1126,336.500 L1121,339.500 Z" fill="#8a80c8"/><path d="M1112,340.500 H1119 M1115.500,337 V344" stroke="#111" stroke-width="1.100"/><path d="M1139,329.500 L1143.500,333.500 L1139,337.500 Z" fill="#000"/><rect x="1323.500" y="324" width="17" height="17.500" fill="#e4e4e4"/><path d="M1324,341.500 V324.500 H1340.500" stroke="#9a9a9a" fill="none"/><g transform="translate(1332,331.5) scale(1.05)"><circle cx="0" cy="0" r="4.800" fill="url(#rgbulb)"/><path d="M-2.600,3.500 H2.600 L2,7 H-2 Z" fill="#f0c020"/><rect x="-2" y="6.500" width="4" height="2.800" fill="#3a2a18"/><circle cx="-1.400" cy="-1.600" r="1.600" fill="#fffce0" opacity="0.900"/></g><g transform="translate(1311.8,349)"><rect x="0" y="0" width="12.400" height="12" rx="1.800" fill="#164fa8"/><rect x="0.500" y="0.500" width="11.400" height="11" rx="1.500" fill="none" stroke="#3a78d8" stroke-width="0.600"/><path d="M6.200,10 V3 M3,6 L6.200,2.800 L9.400,6" fill="none" stroke="#fff" stroke-width="1.900"/></g><g transform="translate(1329.8,349)"><rect x="0" y="0" width="12.400" height="12" rx="1.800" fill="#164fa8"/><rect x="0.500" y="0.500" width="11.400" height="11" rx="1.500" fill="none" stroke="#3a78d8" stroke-width="0.600"/><path d="M6.200,2.500 V9.500 M3,6.500 L6.200,9.700 L9.400,6.500" fill="none" stroke="#fff" stroke-width="1.900"/></g><g fill="#fdfdfd" stroke="#e4e4e4"><rect x="1309.500" y="24.500" width="17" height="17"/><rect x="1328.500" y="24.500" width="17" height="17"/><rect x="1347.500" y="24.500" width="17" height="17"/></g><rect x="1314" y="35" width="6.500" height="2" fill="#8a8a8a"/><g fill="none" stroke="#8a8a8a" stroke-width="1.300"><path d="M1335.500,32 V29.500 H1341 V34.500 H1339"/><rect x="1333.500" y="32.500" width="5.500" height="4.500"/><path d="M1333.500,33 H1339 M1335.500,30 H1341" stroke-width="1.800"/></g><path d="M1352.500,30 L1358.500,36.500 M1358.500,30 L1352.500,36.500" stroke="#8a8a8a" stroke-width="2" fill="none"/><g fill="none" stroke="#111" stroke-width="1.100" shape-rendering="crispEdges"><path d="M1245,10.500 H1255"/><rect x="1290.500" y="7.500" width="7" height="7"/><path d="M1292.500,7.500 V5.500 H1299.500 V12.500 H1297.500"/></g><path d="M1336.200,5.200 L1346,15 M1346,5.200 L1336.200,15" stroke="#111" stroke-width="1.100" fill="none"/></svg></div>
<svg class="a" style="left:0;top:715px" width="1366" height="52" viewBox="0 715 1366 52">
<defs>
<filter id="tex" x="0" y="0" width="100%" height="100%"><feTurbulence type="fractalNoise" baseFrequency="0.28 0.22" numOctaves="2" seed="7" result="n"/><feColorMatrix in="n" type="matrix" values="0 0 0 0 0.90  0 0 0 0 0.90  0 0 0 0 0.90  1.6 1.6 0 0 -1.0"/><feComposite in2="SourceGraphic" operator="in"/></filter>
</defs>
<!-- left strip -->
<rect x="0" y="721" width="270" height="26" fill="#d3d3d3"/>
<rect x="0" y="721" width="270" height="26" fill="#e6e6e6" filter="url(#tex)"/>
<rect x="0" y="746" width="270" height="1.500" fill="#a4a4a4"/>
<rect x="62" y="721" width="208" height="1" fill="#ababab"/>
<path d="M0,721 H61.500 V741 C61.500,744 59.500,746 56.500,746 H0 Z" fill="#f1f1f1"/>
<path d="M61.500,722 V741 C61.500,744 59.500,746 56.500,746" fill="none" stroke="#c4c4c4" stroke-width="1"/>
<path d="M63,746 V726 C63,723.500 64.500,722.500 66.500,722.500 H128.500 V741.500 C128.500,744.500 126.500,746 123.500,746 Z" fill="#f4f4f4" stroke="#adadad" stroke-width="1"/>
<rect x="0" y="747.500" width="1366" height="19.500" fill="#f0f0f0"/>
<!-- right strip -->
<rect x="1094" y="721" width="272" height="26" fill="#d3d3d3"/>
<rect x="1094" y="721" width="272" height="26" fill="#e6e6e6" filter="url(#tex)"/>
<rect x="1094" y="746" width="272" height="1.500" fill="#a4a4a4"/>
<path d="M1094,720 H1143.500 V741 C1143.500,744 1141.500,746 1138.500,746 H1094 Z" fill="#f1f1f1"/>
<path d="M1143.500,722 V741 C1143.500,744 1141.500,746 1138.500,746" fill="none" stroke="#c4c4c4" stroke-width="1"/>
<path d="M1144.500,746 V726 C1144.500,723.500 1146,722.500 1148,722.500 H1191.500 V741.500 C1191.500,744.500 1189.500,746 1186.500,746 Z" fill="#f4f4f4" stroke="#adadad" stroke-width="1"/>
<rect x="1144" y="721" width="222" height="1" fill="#a4a4a4"/>
<rect x="1093" y="721" width="1" height="27" fill="#8e8e8e"/>
<!-- status boxes -->
<g fill="none" shape-rendering="crispEdges">
<path d="M1023.500,767 V750.500 H1088.500" stroke="#a0a0a0"/><path d="M1088.500,751 V767" stroke="#fff"/>
<path d="M1092.500,767 V750.500 H1158.500" stroke="#a0a0a0"/><path d="M1158.500,751 V767" stroke="#fff"/>
<path d="M1161.500,767 V750.500 H1220.500" stroke="#a0a0a0"/><path d="M1220.500,751 V767" stroke="#fff"/>
<path d="M1224.500,767 V750.500 H1294.500" stroke="#a0a0a0"/><path d="M1294.500,751 V767" stroke="#fff"/>
<path d="M1297.500,767 V750.500 H1366" stroke="#a0a0a0"/>
</g>
</svg>
<div class="t" style="left:8.2px;top:726.5px;letter-spacing:-0.23px;color:#10101c">Assistant</div>
<div class="t" style="left:71.4px;top:727.2px;color:#10101c">Toolpaths</div>
<div class="t" style="left:1103px;top:726.5px;letter-spacing:-0.5px;color:#10101c">Layers</div>
<div class="t" style="left:1151.4px;top:727.2px;letter-spacing:-0.1px;color:#10101c">Add In</div>
<div class="t" style="left:1025.6px;top:753.5px;transform:scaleX(0.866);transform-origin:0 0;">X: 1016.571</div>
<div class="t" style="left:1094px;top:753.5px;transform:scaleX(0.924);transform-origin:0 0;">Y: -603.367</div>
<!-- app icons -->
<svg class="a" style="left:0;top:0" width="30" height="42" viewBox="0 0 30 42">
<g id="appico">
<path d="M3,17.500 H11 L10,15 H4 Z" fill="#3a8ad0"/>
<rect x="5" y="6.500" width="4.500" height="9" fill="#5a9ad8"/><rect x="4" y="9" width="6.500" height="2" fill="#2a5aa0"/><rect x="5.500" y="4.500" width="3.500" height="3" fill="#88b8e8"/>
<path d="M9.500,17.500 L13.500,4.500 H15 L17.500,17.500 H15.300 L14.800,14 H12.300 L11.500,17.500 Z M12.800,12 H14.500 L14,8 Z" fill="#7a1a9a"/>
<path d="M11,18 H17.500" stroke="#4a1070" stroke-width="0.800"/>
</g>
<use href="#appico" transform="translate(5.500,20.500)"/>
</svg>

</body>
</html>
